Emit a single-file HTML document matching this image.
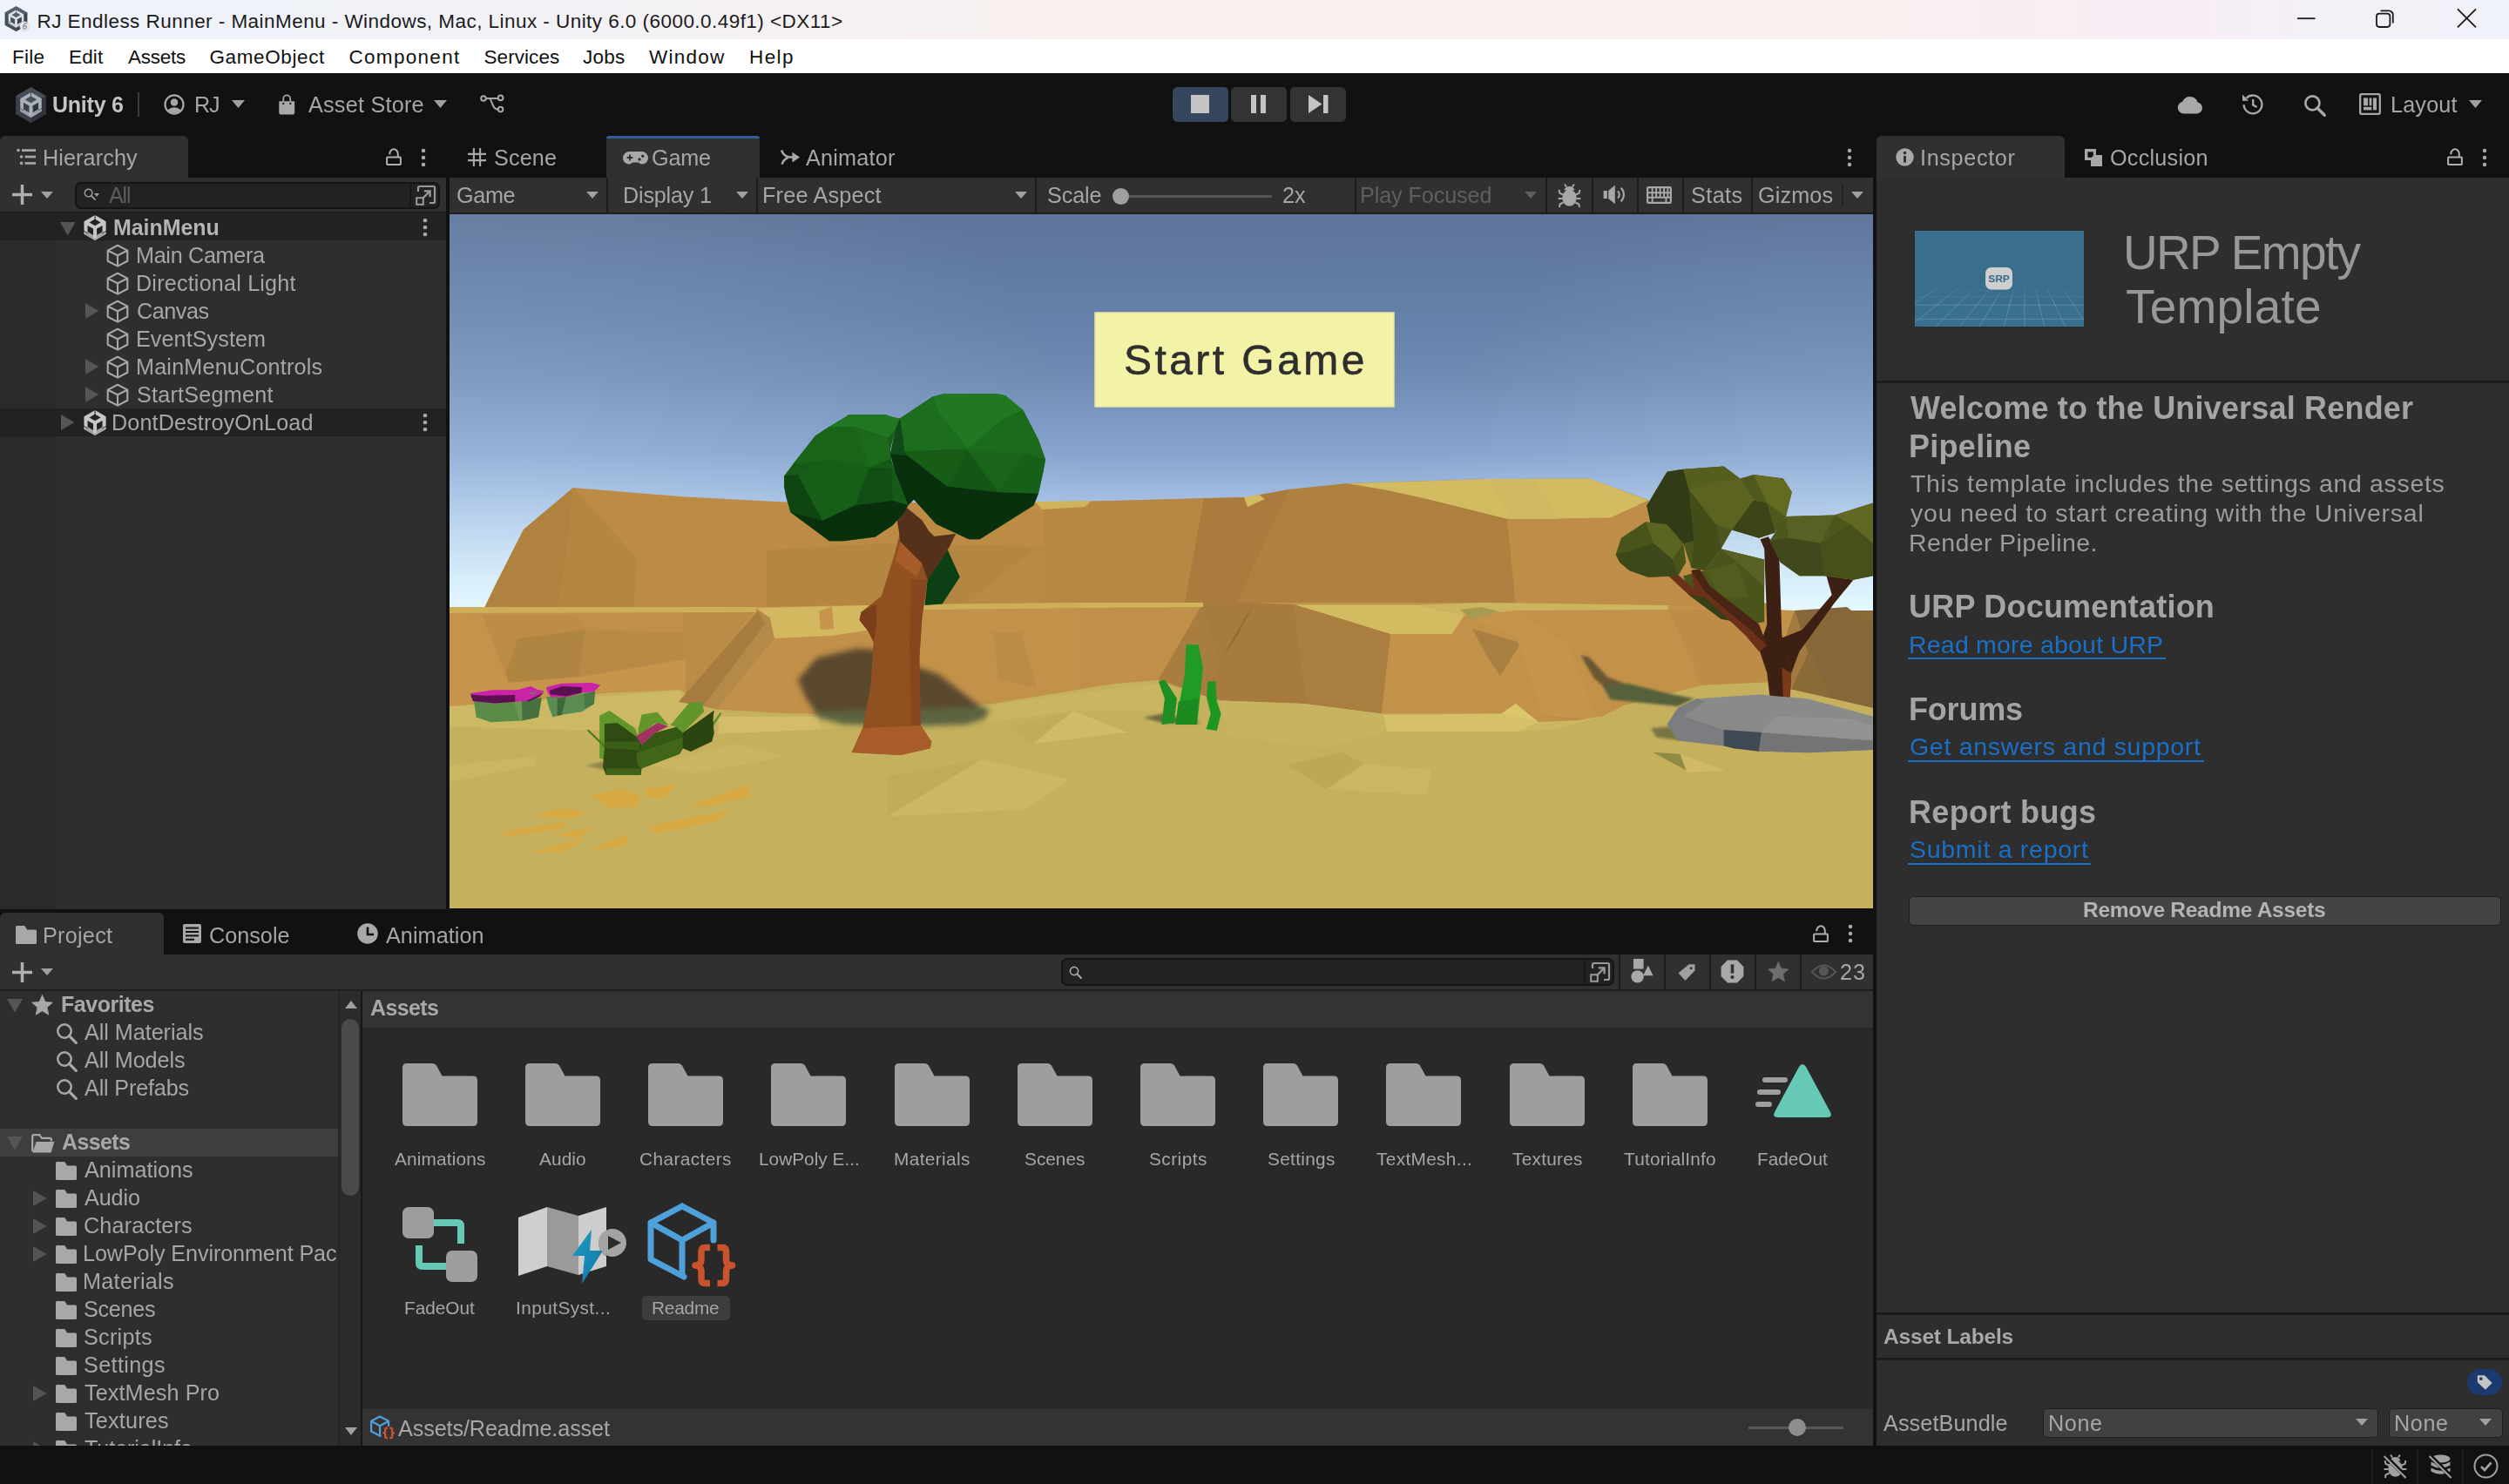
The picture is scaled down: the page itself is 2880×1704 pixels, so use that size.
<!DOCTYPE html>
<html><head><meta charset="utf-8"><title>Unity</title><style>
html,body{margin:0;padding:0;background:#111;}
body{width:2880px;height:1704px;position:relative;overflow:hidden;font-family:"Liberation Sans", sans-serif;}
#r{position:absolute;left:0;top:0;width:2880px;height:1704px;overflow:hidden;}
#r>div,#r>span,#r>svg{position:absolute;}
.t{white-space:nowrap;display:block;}
.g{will-change:transform;}
svg{overflow:visible;}
</style></head><body><div id="r">
<div style="left:0px;top:0px;width:2880px;height:1704px;background:#111111;"></div>
<div style="left:0px;top:0px;width:2880px;height:45px;background:linear-gradient(90deg,#eef2f9 0%,#f0f2f8 14%,#f5f1f3 30%,#f8f0ef 42%,#f8efef 75%,#f7edf6 87.5%,#f2f1f8 94%,#f0f2f9 100%);"></div>
<svg style="left:4px;top:6.5px" width="30.450000000000003" height="30.450000000000003" viewBox="0 0 105 105"><path d="M50 0L94 25V75L50 100L6 75V25Z" fill="#56606c"/><path d="M6 25L50 50V100L6 75Z" fill="#46505b"/><path d="M94 25L50 50V100L94 75Z" fill="#3a424c"/><g transform="translate(14 14) scale(0.72)"><path d="M50 8L86.4 29V71L50 92L13.6 71V29Z M13.6 29L50 50L86.4 29M50 50V92" fill="none" stroke="#dde2e8" stroke-width="12" stroke-linejoin="miter"/><path d="M13.6 71L50 92L86.4 71" fill="none" stroke="#c4cad2" stroke-width="12" stroke-linejoin="miter"/><path d="M50 57V92" stroke="#dde2e8" stroke-width="12"/><path d="M50 -2V22" stroke="#56606c" stroke-width="3.5"/><path d="M4 62L21 72M96 62L79 72" stroke="#56606c" stroke-width="3"/></g><circle cx="84" cy="80" r="19" fill="#f2f3f5"/><circle cx="84" cy="80" r="19" fill="none" stroke="#b9bdc4" stroke-width="2"/><text x="84" y="93" text-anchor="middle" font-family="Liberation Sans" font-weight="700" font-style="italic" font-size="36" fill="#8e949d">6</text></svg>
<span class="t" style="left:42.5px;top:14px;font-size:22.5px;line-height:22.5px;color:#1b1b1b;letter-spacing:0.453px;">RJ Endless Runner - MainMenu - Windows, Mac, Linux - Unity 6.0 (6000.0.49f1) &lt;DX11&gt;</span>
<svg style="left:2636px;top:8px" width="210" height="26" viewBox="0 0 210 26"><path d="M1 13.2H21.5" stroke="#1a1a1a" stroke-width="1.8" fill="none"/><rect x="92" y="7.6" width="15.4" height="15.4" rx="3.2" fill="none" stroke="#1a1a1a" stroke-width="1.8"/><path d="M96.6 4.4H106.2A4.6 4.6 0 0 1 110.8 9V18.6" fill="none" stroke="#1a1a1a" stroke-width="1.8"/><path d="M185 2.4L206 23.4M206 2.4L185 23.4" stroke="#1a1a1a" stroke-width="1.8" fill="none"/></svg>
<div style="left:0px;top:45px;width:2880px;height:39px;background:#ffffff;"></div>
<span class="t" style="left:14.0px;top:55px;font-size:22.5px;line-height:22.5px;color:#111;letter-spacing:0.253px;">File</span>
<span class="t" style="left:79.0px;top:55px;font-size:22.5px;line-height:22.5px;color:#111;letter-spacing:0.160px;">Edit</span>
<span class="t" style="left:147.0px;top:55px;font-size:22.5px;line-height:22.5px;color:#111;letter-spacing:-0.254px;">Assets</span>
<span class="t" style="left:240.5px;top:55px;font-size:22.5px;line-height:22.5px;color:#111;letter-spacing:0.606px;">GameObject</span>
<span class="t" style="left:400.5px;top:55px;font-size:22.5px;line-height:22.5px;color:#111;letter-spacing:1.303px;">Component</span>
<span class="t" style="left:555.5px;top:55px;font-size:22.5px;line-height:22.5px;color:#111;letter-spacing:0.068px;">Services</span>
<span class="t" style="left:669.0px;top:55px;font-size:22.5px;line-height:22.5px;color:#111;letter-spacing:0.241px;">Jobs</span>
<span class="t" style="left:745.0px;top:55px;font-size:22.5px;line-height:22.5px;color:#111;letter-spacing:1.245px;">Window</span>
<span class="t" style="left:860.0px;top:55px;font-size:22.5px;line-height:22.5px;color:#111;letter-spacing:1.413px;">Help</span>
<div style="left:0px;top:84px;width:2880px;height:72px;background:#111111;"></div>
<svg style="left:17.5px;top:100px" width="35" height="41" viewBox="6 0 88 100" preserveAspectRatio="none"><path d="M50 0L94 25V75L50 100L6 75V25Z" fill="#464d57"/><path d="M6 25L50 50V100L6 75Z" fill="#3a4049"/><path d="M94 25L50 50V100L94 75Z" fill="#30353d"/><g transform="translate(14 14) scale(0.72)"><path d="M50 8L86.4 29V71L50 92L13.6 71V29Z M13.6 29L50 50L86.4 29M50 50V92" fill="none" stroke="#aab0b9" stroke-width="13" stroke-linejoin="miter"/><path d="M13.6 71L50 92L86.4 71" fill="none" stroke="#9aa0a9" stroke-width="13" stroke-linejoin="miter"/><path d="M50 57V92" stroke="#aab0b9" stroke-width="13"/><path d="M50 -2V22" stroke="#464d57" stroke-width="3.5"/><path d="M4 62L21 72M96 62L79 72" stroke="#464d57" stroke-width="3"/></g></svg>
<span class="t g" style="left:60.0px;top:108px;font-size:25px;line-height:25px;color:#c4c4c4;font-weight:700;letter-spacing:-0.241px;">Unity 6</span>
<div style="left:158px;top:106px;width:2px;height:28px;background:#3a3a3a;"></div>
<svg style="left:188px;top:108px" width="24" height="24" viewBox="0 0 26 26"><defs><clipPath id="acc"><circle cx="13" cy="13" r="10.6"/></clipPath></defs><circle cx="13" cy="13" r="11.4" fill="none" stroke="#a8a8a8" stroke-width="2.4"/><circle cx="13" cy="10.4" r="4.6" fill="#a8a8a8"/><ellipse cx="13" cy="23.5" rx="9" ry="7" fill="#a8a8a8" clip-path="url(#acc)"/></svg>
<span class="t g" style="left:223.0px;top:108px;font-size:25.2px;line-height:25.2px;color:#a6a6a6;letter-spacing:-1.190px;">RJ</span>
<svg style="left:266px;top:115px" width="15" height="9" viewBox="0 0 15 9"><path d="M0 0H15L7.5 9Z" fill="#a0a0a0"/></svg>
<svg style="left:319px;top:108.5px" width="20.5" height="23" viewBox="0 0 23 27"><path d="M1 8.5H22V23.5A3 3 0 0 1 19 26.5H4A3 3 0 0 1 1 23.5Z" fill="#a8a8a8"/><path d="M6.8 11V5.2A4.7 4.7 0 0 1 16.2 5.2V11" fill="none" stroke="#a8a8a8" stroke-width="2"/><circle cx="6.8" cy="11.6" r="1.3" fill="#111"/><circle cx="16.2" cy="11.6" r="1.3" fill="#111"/></svg>
<span class="t g" style="left:353.5px;top:108px;font-size:25.2px;line-height:25.2px;color:#a6a6a6;letter-spacing:0.232px;">Asset Store</span>
<svg style="left:498px;top:115px" width="15" height="9" viewBox="0 0 15 9"><path d="M0 0H15L7.5 9Z" fill="#a0a0a0"/></svg>
<svg style="left:551px;top:108px" width="28" height="22" viewBox="0 0 28 22"><g fill="none" stroke="#a8a8a8" stroke-width="2"><circle cx="4" cy="5" r="2.8"/><circle cx="23.6" cy="4.4" r="2.8"/><circle cx="23.6" cy="17.6" r="2.8"/><path d="M6.8 5H20.8M10.5 5C14 5 13 17.6 20.8 17.6"/></g></svg>
<div style="left:1345.5px;top:100px;width:64px;height:40px;background:#35465d;border-radius:6px 5px 5px 6px;"></div>
<div style="left:1367px;top:109px;width:21px;height:21px;background:#c4c4c4;"></div>
<div style="left:1413px;top:100px;width:64px;height:40px;background:#333333;border-radius:5px;"></div>
<div style="left:1436px;top:109px;width:6px;height:21px;background:#c4c4c4;"></div>
<div style="left:1447px;top:109px;width:6px;height:21px;background:#c4c4c4;"></div>
<div style="left:1481px;top:100px;width:64px;height:40px;background:#333333;border-radius:5px 6px 6px 5px;"></div>
<svg style="left:1502px;top:109px" width="23" height="21" viewBox="0 0 23 21"><path d="M0 0L15.5 10.5L0 21Z" fill="#c4c4c4"/><rect x="17" y="0" width="5.5" height="21" fill="#c4c4c4"/></svg>
<svg style="left:2499px;top:109px" width="29" height="22" viewBox="0 0 29 22"><path d="M7.5 21.5A7 7 0 0 1 6.2 7.7A9.3 9.3 0 0 1 23.6 8.6A6.5 6.5 0 0 1 22.5 21.5Z" fill="#a8a8a8"/></svg>
<svg style="left:2571px;top:106px" width="28" height="27" viewBox="0 0 28 27"><path d="M4.6 14.2A10.4 10.4 0 1 0 7.6 6.6" fill="none" stroke="#a8a8a8" stroke-width="2.3"/><path d="M3 2.6V9.8H10.2Z" fill="#a8a8a8"/><path d="M15.2 8V14.6L19.6 17" fill="none" stroke="#a8a8a8" stroke-width="2.4"/></svg>
<svg style="left:2643.5px;top:107.5px" width="26" height="26" viewBox="0 0 24 24"><circle cx="9.6" cy="9.6" r="7.4" fill="none" stroke="#a8a8a8" stroke-width="2.5"/><path d="M14.8 14.8L22.4 22.4" stroke="#a8a8a8" stroke-width="3.125" stroke-linecap="round"/></svg>
<svg style="left:2708px;top:107px" width="25" height="25" viewBox="0 0 25 25"><rect x="1.2" y="1.2" width="22.6" height="22.6" rx="1.6" fill="none" stroke="#a8a8a8" stroke-width="2.3"/><rect x="5" y="5.4" width="5" height="8.9" fill="#a8a8a8"/><rect x="11.6" y="5.4" width="2.8" height="8.9" fill="#a8a8a8"/><rect x="16" y="5.4" width="4" height="14" fill="#a8a8a8"/><rect x="5" y="15.8" width="9.4" height="3.6" fill="#a8a8a8"/></svg>
<span class="t g" style="left:2744.0px;top:108px;font-size:25.2px;line-height:25.2px;color:#a6a6a6;letter-spacing:0.175px;">Layout</span>
<svg style="left:2834px;top:115px" width="15" height="9" viewBox="0 0 15 9"><path d="M0 0H15L7.5 9Z" fill="#a0a0a0"/></svg>
<div style="left:0px;top:156px;width:2880px;height:48px;background:#111111;"></div>
<div style="left:0px;top:156px;width:216px;height:48px;background:#303030;border-radius:6px 6px 0 0;"></div>
<svg style="left:19px;top:170px" width="22" height="20" viewBox="0 0 22 20"><g fill="#a8a8a8"><circle cx="2" cy="2.6" r="1.8"/><rect x="6" y="1.3" width="16" height="2.7"/><circle cx="5.6" cy="10" r="1.8"/><rect x="9.6" y="8.7" width="12.4" height="2.7"/><circle cx="5.6" cy="17.4" r="1.8"/><rect x="9.6" y="16.1" width="12.4" height="2.7"/></g></svg>
<span class="t g" style="left:49.0px;top:169px;font-size:25.2px;line-height:25.2px;color:#a6a6a6;letter-spacing:0.103px;">Hierarchy</span>
<svg style="left:443px;top:170px" width="18" height="20" viewBox="0 0 18 20"><rect x="1.1" y="10.4" width="15.8" height="8.6" rx="0.8" fill="none" stroke="#b0b0b0" stroke-width="2"/><path d="M4.3 7.2A4.75 5.6 0 0 1 13.8 6.6V10.4" fill="none" stroke="#b0b0b0" stroke-width="2"/></svg>
<svg style="left:483px;top:170px" width="6" height="22" viewBox="0 0 6 22"><circle cx="3" cy="3" r="2.3" fill="#a8a8a8"/><circle cx="3" cy="11" r="2.3" fill="#a8a8a8"/><circle cx="3" cy="19" r="2.3" fill="#a8a8a8"/></svg>
<svg style="left:537px;top:170px" width="21" height="21" viewBox="0 0 21 21"><path d="M6.9 0V21M14.1 0V21M0 6.9H21M0 14.1H21" stroke="#a8a8a8" stroke-width="2.1" fill="none"/></svg>
<span class="t g" style="left:567.0px;top:169px;font-size:25.2px;line-height:25.2px;color:#a6a6a6;letter-spacing:0.148px;">Scene</span>
<div style="left:696px;top:156px;width:176px;height:48px;background:#303030;border-radius:6px 6px 0 0;"></div>
<div style="left:696px;top:156px;width:176px;height:3px;background:#2f5f94;border-radius:6px 6px 0 0;"></div>
<svg style="left:715px;top:173px" width="29" height="17" viewBox="0 0 29 17"><path d="M7.5 1H21.5A7.5 7.5 0 0 1 29 8.5A7 7 0 0 1 22 15.5Q19.5 15.5 18 13.6H11Q9.5 15.5 7 15.5A7 7 0 0 1 0 8.5A7.5 7.5 0 0 1 7.5 1Z" fill="#a8a8a8"/><path d="M4.6 8H11.4M8 4.6V11.4" stroke="#303030" stroke-width="2"/><circle cx="19" cy="10" r="1.7" fill="#303030"/><circle cx="22.8" cy="6.2" r="1.7" fill="#303030"/></svg>
<span class="t g" style="left:748.0px;top:169px;font-size:25.2px;line-height:25.2px;color:#a6a6a6;letter-spacing:-0.194px;">Game</span>
<svg style="left:895px;top:171px" width="23" height="19" viewBox="0 0 23 19"><path d="M2 1.6C5 8.6 8 9.6 16 9.6M2.6 17.6C3.6 13.6 6 11.4 9.4 10.2" fill="none" stroke="#a8a8a8" stroke-width="2.5"/><path d="M14.4 3.8L23 9.6L14.4 15.4Z" fill="#a8a8a8"/></svg>
<span class="t g" style="left:925.0px;top:169px;font-size:25.2px;line-height:25.2px;color:#a6a6a6;letter-spacing:0.229px;">Animator</span>
<svg style="left:2120px;top:170px" width="6" height="22" viewBox="0 0 6 22"><circle cx="3" cy="3" r="2.3" fill="#a8a8a8"/><circle cx="3" cy="11" r="2.3" fill="#a8a8a8"/><circle cx="3" cy="19" r="2.3" fill="#a8a8a8"/></svg>
<div style="left:2154px;top:156px;width:216px;height:48px;background:#303030;border-radius:6px 6px 0 0;"></div>
<svg style="left:2176px;top:170px" width="21" height="21" viewBox="0 0 21 21"><circle cx="10.5" cy="10.5" r="10.2" fill="#a8a8a8"/><rect x="9" y="9" width="3" height="7.6" fill="#303030"/><circle cx="10.5" cy="5.6" r="1.8" fill="#303030"/></svg>
<span class="t g" style="left:2204.0px;top:169px;font-size:25.2px;line-height:25.2px;color:#a6a6a6;letter-spacing:0.661px;">Inspector</span>
<svg style="left:2393px;top:171px" width="20" height="20" viewBox="0 0 20 20"><rect x="0" y="0" width="13" height="13" fill="#a8a8a8"/><rect x="7" y="7" width="13" height="13" fill="#a8a8a8"/><rect x="3.4" y="3.4" width="6.4" height="6.4" fill="#111"/><rect x="8.4" y="8.4" width="3.2" height="3.2" fill="#a8a8a8"/></svg>
<span class="t g" style="left:2422.0px;top:169px;font-size:25.2px;line-height:25.2px;color:#a6a6a6;letter-spacing:0.240px;">Occlusion</span>
<svg style="left:2809px;top:170px" width="18" height="20" viewBox="0 0 18 20"><rect x="1.1" y="10.4" width="15.8" height="8.6" rx="0.8" fill="none" stroke="#b0b0b0" stroke-width="2"/><path d="M4.3 7.2A4.75 5.6 0 0 1 13.8 6.6V10.4" fill="none" stroke="#b0b0b0" stroke-width="2"/></svg>
<svg style="left:2849px;top:170px" width="6" height="22" viewBox="0 0 6 22"><circle cx="3" cy="3" r="2.3" fill="#a8a8a8"/><circle cx="3" cy="11" r="2.3" fill="#a8a8a8"/><circle cx="3" cy="19" r="2.3" fill="#a8a8a8"/></svg>
<div style="left:0px;top:204px;width:512px;height:840px;background:#2e2e2e;"></div>
<div style="left:0px;top:204px;width:512px;height:40px;background:#303030;"></div>
<div style="left:0px;top:243px;width:512px;height:2px;background:#1e1e1e;"></div>
<svg style="left:14px;top:212px" width="23" height="23" viewBox="0 0 23 23"><rect x="0" y="9.75" width="23" height="3.5" fill="#b0b0b0"/><rect x="9.75" y="0" width="3.5" height="23" fill="#b0b0b0"/></svg>
<svg style="left:47px;top:220px" width="14" height="8" viewBox="0 0 14 8"><path d="M0 0H14L7.0 8Z" fill="#a0a0a0"/></svg>
<div style="left:86px;top:209px;width:419px;height:31px;background:#222222;border-radius:7px;border:2px solid #141414;box-sizing:border-box;"></div>
<svg style="left:96px;top:216px" width="14" height="14" viewBox="0 0 24 24"><circle cx="9.6" cy="9.6" r="7.4" fill="none" stroke="#a0a0a0" stroke-width="2.4"/><path d="M14.8 14.8L22.4 22.4" stroke="#a0a0a0" stroke-width="3.0" stroke-linecap="round"/></svg>
<svg style="left:108px;top:222px" width="6" height="4" viewBox="0 0 6 4"><path d="M0 0H6L3.0 4Z" fill="#a0a0a0"/></svg>
<span class="t g" style="left:125.0px;top:212px;font-size:25.2px;line-height:25.2px;color:#5c5c5c;letter-spacing:-1.198px;">All</span>
<div style="left:470px;top:211px;width:2px;height:27px;background:#181818;"></div>
<svg style="left:476px;top:212px" width="25" height="25" viewBox="0 0 25 25"><path d="M4 8V3.6A1.6 1.6 0 0 1 5.6 2H21.4A1.6 1.6 0 0 1 23 3.6V19.4A1.6 1.6 0 0 1 21.4 21H17" fill="none" stroke="#9a9a9a" stroke-width="2.2"/><rect x="2.2" y="15.2" width="7.6" height="7.6" fill="none" stroke="#9a9a9a" stroke-width="2"/><path d="M8.6 16.4L17 8M10.8 7.4H17.6V14.2" fill="none" stroke="#9a9a9a" stroke-width="2.3"/></svg>
<div style="left:0px;top:245px;width:64px;height:799px;background:#2a2a2a;"></div>
<div style="left:0px;top:245px;width:512px;height:31px;background:#222222;"></div>
<div style="left:0px;top:469px;width:512px;height:32px;background:#222222;"></div>
<div style="left:0px;top:276px;width:512px;height:1px;background:#2a2a2a;"></div>
<svg style="left:68.5px;top:255px" width="17.5" height="15.5" viewBox="0 0 17.5 15.5"><path d="M0 0H17.5L8.75 15.5Z" fill="#555555"/></svg>
<svg style="left:96px;top:246.5px" width="26.1" height="29" viewBox="5 0 90 100"><g transform="translate(0 0) scale(1.0)"><path d="M50 8L86.4 29V71L50 92L13.6 71V29Z M13.6 29L50 50L86.4 29M50 50V92" fill="none" stroke="#c6c6c6" stroke-width="14" stroke-linejoin="miter"/><path d="M13.6 71L50 92L86.4 71" fill="none" stroke="#a2a2a2" stroke-width="14" stroke-linejoin="miter"/><path d="M50 57V92" stroke="#c6c6c6" stroke-width="14"/><path d="M50 -2V22" stroke="#222222" stroke-width="3.5"/><path d="M4 62L21 72M96 62L79 72" stroke="#222222" stroke-width="3"/></g></svg>
<span class="t g" style="left:130.0px;top:249px;font-size:25px;line-height:25px;color:#b4b4b4;font-weight:700;letter-spacing:-0.064px;">MainMenu</span>
<svg style="left:485px;top:250px" width="6" height="22" viewBox="0 0 6 22"><circle cx="3" cy="3" r="2.3" fill="#a8a8a8"/><circle cx="3" cy="11" r="2.3" fill="#a8a8a8"/><circle cx="3" cy="19" r="2.3" fill="#a8a8a8"/></svg>
<svg style="left:122px;top:280px" width="26" height="27" viewBox="0 0 26 27"><path d="M13 1.8L24.3 7.6V19.8L13 25.6L1.7 19.8V7.6Z M1.9 7.7L13 13.3L24.1 7.7 M13 13.3V25.4" fill="none" stroke="#a8a8a8" stroke-width="2.1" stroke-linejoin="round"/></svg>
<span class="t g" style="left:155.5px;top:281px;font-size:25.2px;line-height:25.2px;color:#a6a6a6;letter-spacing:-0.317px;">Main Camera</span>
<svg style="left:122px;top:312px" width="26" height="27" viewBox="0 0 26 27"><path d="M13 1.8L24.3 7.6V19.8L13 25.6L1.7 19.8V7.6Z M1.9 7.7L13 13.3L24.1 7.7 M13 13.3V25.4" fill="none" stroke="#a8a8a8" stroke-width="2.1" stroke-linejoin="round"/></svg>
<span class="t g" style="left:155.5px;top:313px;font-size:25.2px;line-height:25.2px;color:#a6a6a6;letter-spacing:0.181px;">Directional Light</span>
<svg style="left:97.5px;top:348px" width="15.5" height="18" viewBox="0 0 15.5 18"><path d="M0 0V18L15.5 9.0Z" fill="#555555"/></svg>
<svg style="left:122px;top:344px" width="26" height="27" viewBox="0 0 26 27"><path d="M13 1.8L24.3 7.6V19.8L13 25.6L1.7 19.8V7.6Z M1.9 7.7L13 13.3L24.1 7.7 M13 13.3V25.4" fill="none" stroke="#a8a8a8" stroke-width="2.1" stroke-linejoin="round"/></svg>
<span class="t g" style="left:156.5px;top:345px;font-size:25.2px;line-height:25.2px;color:#a6a6a6;letter-spacing:-0.462px;">Canvas</span>
<svg style="left:122px;top:376px" width="26" height="27" viewBox="0 0 26 27"><path d="M13 1.8L24.3 7.6V19.8L13 25.6L1.7 19.8V7.6Z M1.9 7.7L13 13.3L24.1 7.7 M13 13.3V25.4" fill="none" stroke="#a8a8a8" stroke-width="2.1" stroke-linejoin="round"/></svg>
<span class="t g" style="left:155.5px;top:377px;font-size:25.2px;line-height:25.2px;color:#a6a6a6;letter-spacing:0.060px;">EventSystem</span>
<svg style="left:97.5px;top:412px" width="15.5" height="18" viewBox="0 0 15.5 18"><path d="M0 0V18L15.5 9.0Z" fill="#555555"/></svg>
<svg style="left:122px;top:408px" width="26" height="27" viewBox="0 0 26 27"><path d="M13 1.8L24.3 7.6V19.8L13 25.6L1.7 19.8V7.6Z M1.9 7.7L13 13.3L24.1 7.7 M13 13.3V25.4" fill="none" stroke="#a8a8a8" stroke-width="2.1" stroke-linejoin="round"/></svg>
<span class="t g" style="left:155.5px;top:409px;font-size:25.2px;line-height:25.2px;color:#a6a6a6;letter-spacing:0.180px;">MainMenuControls</span>
<svg style="left:97.5px;top:444px" width="15.5" height="18" viewBox="0 0 15.5 18"><path d="M0 0V18L15.5 9.0Z" fill="#555555"/></svg>
<svg style="left:122px;top:440px" width="26" height="27" viewBox="0 0 26 27"><path d="M13 1.8L24.3 7.6V19.8L13 25.6L1.7 19.8V7.6Z M1.9 7.7L13 13.3L24.1 7.7 M13 13.3V25.4" fill="none" stroke="#a8a8a8" stroke-width="2.1" stroke-linejoin="round"/></svg>
<span class="t g" style="left:156.5px;top:441px;font-size:25.2px;line-height:25.2px;color:#a6a6a6;letter-spacing:0.227px;">StartSegment</span>
<svg style="left:70px;top:476px" width="15.5" height="18" viewBox="0 0 15.5 18"><path d="M0 0V18L15.5 9.0Z" fill="#555555"/></svg>
<svg style="left:96px;top:470.5px" width="26.1" height="29" viewBox="5 0 90 100"><g transform="translate(0 0) scale(1.0)"><path d="M50 8L86.4 29V71L50 92L13.6 71V29Z M13.6 29L50 50L86.4 29M50 50V92" fill="none" stroke="#c6c6c6" stroke-width="14" stroke-linejoin="miter"/><path d="M13.6 71L50 92L86.4 71" fill="none" stroke="#a2a2a2" stroke-width="14" stroke-linejoin="miter"/><path d="M50 57V92" stroke="#c6c6c6" stroke-width="14"/><path d="M50 -2V22" stroke="#222222" stroke-width="3.5"/><path d="M4 62L21 72M96 62L79 72" stroke="#222222" stroke-width="3"/></g></svg>
<span class="t g" style="left:127.5px;top:473px;font-size:25.2px;line-height:25.2px;color:#a6a6a6;letter-spacing:0.118px;">DontDestroyOnLoad</span>
<svg style="left:485px;top:474px" width="6" height="22" viewBox="0 0 6 22"><circle cx="3" cy="3" r="2.3" fill="#a8a8a8"/><circle cx="3" cy="11" r="2.3" fill="#a8a8a8"/><circle cx="3" cy="19" r="2.3" fill="#a8a8a8"/></svg>
<div style="left:516px;top:204px;width:1634px;height:42px;background:#303030;"></div>
<div style="left:516px;top:244px;width:1634px;height:2px;background:#1e1e1e;"></div>
<div style="left:696px;top:204px;width:2px;height:40px;background:#1c1c1c;"></div>
<div style="left:868px;top:204px;width:2px;height:40px;background:#1c1c1c;"></div>
<div style="left:1188px;top:204px;width:2px;height:40px;background:#1c1c1c;"></div>
<div style="left:1555px;top:204px;width:2px;height:40px;background:#1c1c1c;"></div>
<div style="left:1774px;top:204px;width:2px;height:40px;background:#1c1c1c;"></div>
<div style="left:1827px;top:204px;width:2px;height:40px;background:#1c1c1c;"></div>
<div style="left:1879px;top:204px;width:2px;height:40px;background:#1c1c1c;"></div>
<div style="left:1931px;top:204px;width:2px;height:40px;background:#1c1c1c;"></div>
<div style="left:2010px;top:204px;width:2px;height:40px;background:#1c1c1c;"></div>
<span class="t g" style="left:523.5px;top:212px;font-size:25.2px;line-height:25.2px;color:#a6a6a6;letter-spacing:-0.360px;">Game</span>
<svg style="left:673px;top:220px" width="14" height="8" viewBox="0 0 14 8"><path d="M0 0H14L7.0 8Z" fill="#a0a0a0"/></svg>
<span class="t g" style="left:715.0px;top:212px;font-size:25.2px;line-height:25.2px;color:#a6a6a6;letter-spacing:-0.198px;">Display 1</span>
<svg style="left:845px;top:220px" width="14" height="8" viewBox="0 0 14 8"><path d="M0 0H14L7.0 8Z" fill="#a0a0a0"/></svg>
<span class="t g" style="left:874.5px;top:212px;font-size:25.2px;line-height:25.2px;color:#a6a6a6;letter-spacing:0.221px;">Free Aspect</span>
<svg style="left:1165px;top:220px" width="14" height="8" viewBox="0 0 14 8"><path d="M0 0H14L7.0 8Z" fill="#a0a0a0"/></svg>
<span class="t g" style="left:1201.5px;top:212px;font-size:25.2px;line-height:25.2px;color:#a6a6a6;letter-spacing:-0.124px;">Scale</span>
<div style="left:1287px;top:224px;width:173px;height:3px;background:#555555;"></div>
<div style="left:1277px;top:216px;width:19px;height:19px;background:#a0a0a0;border-radius:50%;"></div>
<span class="t g" style="left:1471.5px;top:212px;font-size:25.2px;line-height:25.2px;color:#a6a6a6;letter-spacing:-0.008px;">2x</span>
<span class="t g" style="left:1561.0px;top:212px;font-size:25.2px;line-height:25.2px;color:#5f5f5f;letter-spacing:-0.099px;">Play Focused</span>
<svg style="left:1750px;top:220px" width="14" height="8" viewBox="0 0 14 8"><path d="M0 0H14L7.0 8Z" fill="#5f5f5f"/></svg>
<svg style="left:1787px;top:210px" width="29" height="29" viewBox="0 0 29 29"><g fill="#a8a8a8"><ellipse cx="14.5" cy="17.2" rx="8.2" ry="9.6"/><path d="M8.6 8.6A6 5.6 0 0 1 20.4 8.6Z"/></g><g stroke="#a8a8a8" stroke-width="2" fill="none" stroke-linejoin="round"><path d="M7.5 13.5L3.4 11.8L2.6 8M21.5 13.5L25.6 11.8L26.4 8M6.5 18H1.6M22.5 18H27.4M7.6 22.5L3.6 24.4L3 28M21.4 22.5L25.4 24.4L26 28M11 4.6L9.2 1.6M18 4.6L19.8 1.6"/></g></svg>
<svg style="left:1840px;top:212px" width="27" height="23" viewBox="0 0 27 23"><rect x="0.6" y="7" width="4.2" height="9" fill="#a8a8a8"/><path d="M6.2 7L13.8 0.8V22.2L6.2 16Z" fill="#a8a8a8"/><path d="M17 7.4A5.6 5.6 0 0 1 17 15.6M20.6 3.8A10.6 10.6 0 0 1 20.6 19.2" fill="none" stroke="#a8a8a8" stroke-width="2.1"/></svg>
<svg style="left:1890px;top:214px" width="29" height="20" viewBox="0 0 29 20"><rect x="1.1" y="1.1" width="26.8" height="17.8" rx="1.2" fill="none" stroke="#a8a8a8" stroke-width="2.2"/><g stroke="#a8a8a8" stroke-width="1.9" fill="none"><path d="M1 7.2H28M1 12.8H28"/><path d="M6.6 1V12.8"/><path d="M11.1 1V12.8"/><path d="M15.6 1V12.8"/><path d="M20.1 1V12.8"/><path d="M24.3 1V12.8"/><path d="M6.6 12.8V19M22.4 12.8V19"/></g></svg>
<span class="t g" style="left:1941.0px;top:212px;font-size:25.2px;line-height:25.2px;color:#a6a6a6;letter-spacing:0.424px;">Stats</span>
<span class="t g" style="left:2017.5px;top:212px;font-size:25.2px;line-height:25.2px;color:#a6a6a6;letter-spacing:0.146px;">Gizmos</span>
<div style="left:2114px;top:211px;width:2px;height:26px;background:#222;"></div>
<svg style="left:2125px;top:220px" width="14" height="8" viewBox="0 0 14 8"><path d="M0 0H14L7.0 8Z" fill="#a0a0a0"/></svg>
<svg style="left:516px;top:246px" width="1634" height="797" viewBox="516 246 1634 797" shape-rendering="geometricPrecision">
<defs><linearGradient id="sky" gradientUnits="userSpaceOnUse" x1="0" y1="246" x2="0" y2="700"><stop offset="0" stop-color="#5d7399"/><stop offset=".25" stop-color="#6580a8"/><stop offset=".42" stop-color="#718cb4"/><stop offset=".6" stop-color="#87a3cd"/><stop offset=".7" stop-color="#9eb9de"/><stop offset=".8" stop-color="#b9d1eb"/><stop offset=".9" stop-color="#d3e8f6"/><stop offset="1" stop-color="#e9fbff"/></linearGradient><radialGradient id="skl" gradientUnits="userSpaceOnUse" cx="516" cy="720" r="760"><stop offset="0" stop-color="#d6f0ff" stop-opacity=".3"/><stop offset=".5" stop-color="#d0e8ff" stop-opacity=".12"/><stop offset="1" stop-color="#cfe6ff" stop-opacity="0"/></radialGradient><radialGradient id="skr" gradientUnits="userSpaceOnUse" cx="2150" cy="720" r="560"><stop offset="0" stop-color="#d6f0ff" stop-opacity=".22"/><stop offset="1" stop-color="#cfe6ff" stop-opacity="0"/></radialGradient><filter id="b3" x="-20%" y="-20%" width="140%" height="140%"><feGaussianBlur stdDeviation="3"/></filter><filter id="b2" x="-20%" y="-20%" width="140%" height="140%"><feGaussianBlur stdDeviation="1.6"/></filter><clipPath id="gv"><rect x="516" y="246" width="1634" height="797"/></clipPath></defs>
<g clip-path="url(#gv)">
<rect x="516" y="246" width="1634" height="797" fill="url(#sky)"/>
<rect x="516" y="246" width="1634" height="460" fill="url(#skl)"/>
<rect x="516" y="246" width="1634" height="460" fill="url(#skr)"/>
<polygon points="555,700 570,669 601,608 658,560 787,570.5 902,576.6 1000,577 1198,577 1240,576 1430,571 1480,562 1547,555 1709,550 1824,549.6 1892,574 1915,690 1915,702" fill="#bc8b46" />
<polygon points="555,700 570,669 601,608 658,560 650,640 640,700" fill="#b08240" />
<polygon points="658,560 730,640 728,700 640,700 650,640" fill="#b58642" />
<polygon points="880,632 1010,624 1190,628 1384,630 1360,694 880,700" fill="#b38642" />
<polygon points="1190,628 1290,700 1100,700" fill="#b98a45" />
<polygon points="1198,577 1240,576 1382,572 1360,692 1200,692" fill="#b78744" />
<polygon points="1382,572 1430,571 1480,562 1420,692 1360,692" fill="#a97c3d" />
<polygon points="1480,562 1547,555 1603,560 1640,573 1730,596 1740,692 1420,692" fill="#ae8140" />
<polygon points="1730,596 1848,594.5 1892,574 1915,690 1915,702 1740,696" fill="#be8d47" />
<polygon points="1890,574 1925,600 1968,668 2030,694 2032,702 1912,702" fill="#be8d47" />
<polygon points="1546.7,555.3 1603,553.5 1709,550 1824,549.6 1892,574.4 1848.5,594.5 1740,596 1730,595.8 1638.4,572.9 1589,562.3" fill="#d3bb62" />
<polygon points="1709,550 1760,550 1790,596 1735,596" fill="#d0b860" />
<polygon points="1188,576 1252,575 1246,582 1196,585" fill="#d0b45c" />
<polygon points="1428,571 1445,568 1452,573 1432,582" fill="#d3bb62" />
<polygon points="516,697 868,697 1000,694.5 1240,692 1700,692 1915,695 2060,701 2150,701 2150,850 516,850" fill="#c2914a" />
<polygon points="516.0,702.7 553.3,706.1 580.4,773.9 516.0,794.2" fill="#c5934b" />
<polygon points="553.3,706.1 661.7,706.1 671.9,723.0 594.0,733.2 580.4,773.9" fill="#bd8d47" />
<polygon points="594.0,733.2 671.9,723.0 665.1,777.3 583.8,784.0 580.4,773.9" fill="#b08542" />
<polygon points="661.7,706.1 783.8,702.7 783.8,726.4 671.9,723.0" fill="#c0904a" />
<polygon points="671.9,723.0 783.8,726.4 787.1,756.9 665.1,777.3" fill="#b98a46" />
<polygon points="783.8,702.7 868.5,699.3 787.1,797.6 783.8,726.4" fill="#bb8c47" />
<polygon points="516.0,794.2 580.4,773.9 583.8,784.0 665.1,777.3 787.1,756.9 787.1,797.6 692.2,801.0 516.0,814.5" fill="#c6944b" />
<polygon points="1000,700 1240,700 1240,790 1139,808 1070,814 1000,821" fill="#c3924a" />
<polygon points="1140,726 1172,726 1190,790 1146,780" fill="#bb8c47" />
<polygon points="1240,692 1381,692 1330,780 1240,792" fill="#c08f49" />
<polygon points="1381,692 1440,692 1400,760 1381,798.5 1330,780" fill="#a87d3e" />
<polygon points="1381,696.3 1440,692 1486,694.5 1539.6,710.4 1596,728 1585.5,819.7 1398.6,805.5 1381,798.5 1400,760" fill="#a67b3d" />
<polygon points="1440,692 1420,730 1400,760 1435,700" fill="#8e6a35" />
<polygon points="1486,694.5 1539.6,710.4 1500,808 1490,740" fill="#ab7f40" />
<polygon points="1539.6,710.4 1596,728 1585.5,819.7 1500,808" fill="#a97e3f" />
<polygon points="1596,728 1666.6,728 1700,780 1740,822 1592,819.7" fill="#c4934b" />
<polygon points="1690,722 1746,738 1722,776 1706,752" fill="#a98042" />
<polygon points="1746,738 1800,760 1865,810 1808,827 1770,822" fill="#b98b47" />
<polygon points="1680.7,706.8 1740,700 1800,740 1835,826 1770,822 1740,730" fill="#c6954c" />
<polygon points="1740,700 1915,700 1954,786.7 1864,810 1835,826 1800,740" fill="#c3924a" />
<polygon points="1915,700 2040,700 2030,783 1954,786.7" fill="#bd8d48" />
<polygon points="516,697 868,697 868,703 516,704" fill="#cfae5a" />
<polygon points="868,698 1000,695 1000,723 956.6,729.8 888.8,733 883.7,709.5" fill="#d3b860" />
<polygon points="940,702 955,696 957,722 942,723" fill="#c6964c" />
<polygon points="1000,694.5 1240,692 1240,698 1000,701" fill="#cfae5a" />
<polygon points="1240,692 1381,692 1381,697 1240,698" fill="#d0b45c" />
<polygon points="1486.8,694.5 1627.8,694.5 1680.7,706.8 1666.6,728 1596,728 1539.6,710.4" fill="#d3bb62" />
<polygon points="1627.8,694.5 1700,692 1915,695 1915,700 1740,701 1680.7,706.8" fill="#cdb45e" />
<polygon points="1676,700 1700,697 1720,702 1690,712" fill="#a89a50" />
<polygon points="2060,701 2150,701 2150,813 2056,791.4 2075,750" fill="#8a6a37" />
<polygon points="2060,701 2120,697 2150,720 2150,813 2100,800" fill="#86673a" />
<polygon points="2060,701 2075,750 2056,791.4 2040,760" fill="#a27a40" />
<polygon points="516,811 600,805 692,796 780,792 823,814.5 900,819 1000,821 1070,814 1139,808 1280,785 1328,781 1381,798.5 1401.5,804.6 1496.8,808 1585.4,819.4 1723.4,819.4 1739.8,808 1766,829 1808.8,827.6 1839,822.7 1864,810 1954,786.7 2028,783.6 2056,791.4 2150,813 2150,1043 516,1043" fill="#c5b05d" />
<polygon points="516.0,811.2 686.8,799.7 778.7,793.1 801.7,816.1 778.7,829.3 680.2,839.1 516.0,834.2" fill="#cdb863" />
<polygon points="824.7,822.7 939.6,822.7 942.9,837.5 824.7,842.4" fill="#d3bd68" />
<polygon points="939.6,822.7 1074.3,819.4 1205.7,799.7 1330.4,784.9 1340.0,786.6 1340.0,816.1 1238.5,816.1 1133.4,829.3 942.9,837.5" fill="#cab561" />
<polygon points="516.0,878.5 614.5,868.7 614.5,878.5 516.0,898.2" fill="#cbb661" />
<polygon points="745.9,878.5 844.4,853.9 903.5,868.7 795.1,888.4" fill="#cab560" />
<polygon points="1018.5,891.7 1126.8,872.0 1018.5,937.6" fill="#c0ab5a" />
<polygon points="1018.5,937.6 1126.8,872.0 1228.6,894.9 1176.1,929.4" fill="#ccb762" />
<polygon points="1156.4,835.8 1231.9,816.1 1186.0,853.9" fill="#c1ac5b" />
<polygon points="1186.0,853.9 1231.9,816.1 1294.3,840.8" fill="#d0bb67" />
<polygon points="1401.5,804.6 1496.8,807.9 1585.4,819.4 1592.0,839.8 1523.0,858.8 1408.1,845.7" fill="#c8b460" />
<polygon points="1587.1,821.1 1723.4,819.4 1766.1,829.3 1743.1,839.8 1592.0,839.8" fill="#d6c068" />
<polygon points="1723.4,819.4 1739.8,807.9 1766.1,829.3" fill="#dcc66a" />
<polygon points="1766.1,829.3 1808.8,827.6 1838.3,822.7 1785.8,837.5 1743.1,839.8" fill="#ccb762" />
<polygon points="1477.1,878.5 1539.5,863.7 1565.7,876.9 1523.0,906.4" fill="#bda858" />
<polygon points="1523.0,906.4 1565.7,876.9 1642.9,883.4 1638.0,913.0" fill="#cbb662" />
<polygon points="1897.4,863.7 1928.6,866.0 1935.2,884.4" fill="#8f8a44" />
<polygon points="1928.6,866.0 1981.2,885.1 1936.8,886.7" fill="#d0ba66" />
<polygon points="678.7,912.8 712.6,906.1 732.9,912.8 732.9,926.4 699.0,928.1" fill="#d7a942" />
<polygon points="739.7,906.1 777.0,900.0 763.4,916.2 743.1,916.2" fill="#d7a942" />
<polygon points="790.5,924.7 858.3,901.0 861.7,914.5 810.9,926.4" fill="#d7a942" />
<polygon points="614.3,936.6 641.4,928.1 678.7,933.2 651.6,939.9" fill="#d7a942" />
<polygon points="577.0,955.2 651.6,943.3 644.8,951.8 583.8,960.3" fill="#d7a942" />
<polygon points="634.6,958.6 682.1,950.1 665.1,962.0" fill="#d7a942" />
<polygon points="607.5,978.9 671.9,962.0 644.8,978.9" fill="#d7a942" />
<polygon points="675.3,977.2 721.1,956.9 719.4,970.5" fill="#d7a942" />
<polygon points="743.1,948.4 841.4,929.8 821.0,943.3 753.3,956.9" fill="#d7a942" />
<polygon points="778.7,806.1 870.2,701.0 878.7,716.2 807.5,811.1" fill="#a77d3f" />
<polygon points="807.5,811.1 878.7,716.2 870.2,701.0 883.7,709.5 888.8,733.2 822.7,814.5" fill="#b58947" />
<polygon points="822.7,814.5 888.8,733.2 1000.0,729.8 1000.0,821.3" fill="#c1904a" />
<g filter="url(#b3)">
<polygon points="915.8,780.3 937.5,755.5 984.0,744.6 1005.7,746.2 1058.4,767.9 1077.0,774.1 1117.3,805.1 1134.3,817.5 1129.7,825.2 1108.0,831.4 1058.4,833.0 968.5,831.4 940.6,823.7 925.1,802.0" fill="#5a4a2e" />
<polygon points="932.8,817.5 1132.8,811.9 1135.0,818.1 1129.7,825.8 1108.0,832.0 1058.4,833.6 968.5,832.0 940.0,824.3" fill="#5b6340" />
</g>
<g filter="url(#b2)">
<polygon points="1814.4,752.6 1823.7,754.2 1845.4,777.4 1870.2,786.7 1842.3,789.8 1829.9,779.0" fill="#6b5632" />
<polygon points="1839.2,786.7 1870.2,785.2 1913.6,796.0 1944.6,802.2 1926.0,810.9 1848.5,803.2" fill="#56603a" />
<polygon points="1895.0,836.3 1926.0,833.2 1929.1,850.3 1901.2,846.6" fill="#7a7440" />
<polygon points="671.9,878.9 695.6,873.9 695.6,884.0" fill="#8f8448" />
<polygon points="1312.3,823.9 1335.2,819.6 1381.0,830.2 1335.2,830.2" fill="#6f6a3a" />
</g>
<polygon points="544.0,804.4 591.2,804.4 601.4,803.4 621.8,801.2 618.0,823.6 598.9,827.4 563.2,829.3 546.6,823.6" fill="#5b8b49" />
<polygon points="598.9,803.8 621.8,801.2 618.0,823.6 598.9,827.4" fill="#47713f" />
<polygon points="589.9,805.7 598.9,803.8 599.5,827.4 596.3,826.1" fill="#6a9a52" />
<polygon points="626.9,800.0 649.9,800.0 683.1,793.6 681.8,808.3 667.8,817.2 643.5,821.0 634.6,823.6 630.8,814.6" fill="#5b8b51" />
<polygon points="639.7,801.9 649.9,800.0 644.8,821.0 639.7,821.7" fill="#3c6838" />
<polygon points="670.3,796.8 683.1,793.6 681.8,808.3 671.6,813.4" fill="#4a7843" />
<polygon points="540.2,796.1 565.7,792.3 593.8,792.3 609.1,787.9 616.7,791.7 624.4,793.6 619.3,799.3 604.0,805.1 591.2,805.7 568.3,807.6 542.8,805.1" fill="#cb23a8" />
<polygon points="540.2,797.4 555.5,798.7 591.2,798.1 591.2,805.7 568.3,807.6 542.8,805.1" fill="#5c0f50" />
<polygon points="605.3,804.4 624.4,794.9 619.3,800.0 606.5,805.7" fill="#5c0f50" />
<polygon points="606.5,796.1 616.7,794.2 611.6,797.4" fill="#5b8b49" />
<polygon points="626.9,789.1 644.8,784.7 679.2,784.0 689.4,786.6 681.8,794.2 667.8,795.5 649.9,800.6 632.0,800.6 628.2,794.2" fill="#cb23a8" />
<polygon points="630.8,793.0 644.8,787.9 667.8,789.1 667.8,795.5 649.9,799.3 632.0,797.4" fill="#5c0f50" />
<polygon points="688.2,821.7 699.6,815.9 729.0,836.3 732.8,846.5 694.5,831.2 693.9,872.0 688.2,870.8" fill="#62962a" />
<polygon points="732.8,836.3 736.6,820.4 754.5,817.8 767.2,832.5 751.9,830.6 732.8,845.3" fill="#62962a" />
<polygon points="769.8,832.5 791.5,806.4 806.1,806.4 808.1,817.2 783.8,841.4 776.2,835.1" fill="#62962a" />
<polygon points="673.5,838.6 675.4,837.6 696.5,857.4 694.5,859.3" fill="#4f7a22" />
<polygon points="808.7,843.3 826.6,818.2 828.5,819.1 811.2,845.3" fill="#5a8a26" />
<polygon points="693.9,831.2 708.6,829.9 731.5,846.5 736.6,855.5 751.9,841.4 776.2,835.1 783.8,841.4 819.5,815.9 818.3,826.1 819.5,842.1 817.0,851.6 783.8,859.3 780.0,865.7 736.6,882.2 735.4,889.9 695.8,889.9 692.0,881.0 693.9,859.3" fill="#2f4a12" />
<polygon points="693.9,851.6 734.1,851.6 734.1,861.8 711.1,859.9 693.9,859.3" fill="#3b5e16" />
<polygon points="730.3,864.4 783.8,846.5 783.8,859.3 780.0,865.7 736.6,882.2 731.5,878.4" fill="#416619" />
<polygon points="736.6,855.5 751.9,841.4 776.2,835.1 783.8,841.4 783.8,846.5 730.3,864.4 734.1,859.3" fill="#375814" />
<polygon points="730.3,845.3 754.5,829.9 767.2,833.8 751.9,841.4 736.6,855.5" fill="#a03360" />
<polygon points="783.8,841.4 819.5,815.9 818.3,826.1 819.5,842.1 817.0,851.6 792.8,863.1 783.8,859.3" fill="#2b4510" />
<polygon points="695.8,882.2 735.4,882.2 735.4,889.9 695.8,889.9" fill="#3f6217" />
<polygon points="1329.9,782.6 1336.9,780.2 1351.0,802.0 1347.5,830.2 1333.4,832.0 1336.9,802.0" fill="#1d8f22" />
<polygon points="1361.6,740.3 1375.7,740.3 1381.0,766.8 1374.0,832.0 1349.3,832.0 1359.9,773.8" fill="#209c24" />
<polygon points="1352.8,805.5 1375.7,802.0 1374.0,832.0 1349.3,832.0" fill="#1b8a20" />
<polygon points="1386.3,782.6 1395.1,782.6 1396.9,805.5 1401.5,819.6 1396.9,839.0 1384.5,837.3 1389.8,819.6 1385.2,802.0" fill="#1e9622" />
<polygon points="1087.8,631.5 1101.8,662.5 1081.6,693.5 1061.5,695.0 1064.6,665.6 1077.0,640.8" fill="#0c3f14" />
<polygon points="1028.9,591.2 1041.3,583.4 1058.4,597.4 1066.1,609.8 1072.3,616.0 1097.1,612.9 1089.4,628.4 1064.6,665.6 1058.4,709.0 1055.3,755.5 1056.8,833.0 1069.2,851.6 1067.7,859.3 1033.6,867.1 977.8,864.0 990.2,836.1 999.5,786.5 1002.6,736.9 996.4,724.5 986.5,712.1 988.6,702.8 1011.9,684.2 1027.4,634.6 1033.6,609.8" fill="#91501f" />
<polygon points="1028.9,591.2 1041.3,583.4 1058.4,597.4 1066.1,609.8 1072.3,616.0 1097.1,612.9 1089.4,628.4 1064.6,665.6 1058.4,647.0 1033.6,622.2" fill="#55301a" />
<polygon points="1033.6,622.2 1058.4,647.0 1052.2,662.5 1027.4,643.9" fill="#a65c28" />
<polygon points="1046.0,665.6 1064.6,665.6 1058.4,709.0 1055.3,755.5 1056.8,833.0 1046.0,836.1 1044.4,740.0" fill="#85471d" />
<polygon points="986.5,712.1 988.6,702.8 1005.7,693.5 1005.7,721.4 1002.6,736.9 996.4,724.5" fill="#7a3f1a" />
<polygon points="977.8,864.0 990.2,836.1 1056.8,833.0 1069.2,851.6 1067.7,859.3 1033.6,867.1" fill="#a85c2a" />
<polygon points="900.1,546.5 910.2,533.0 935.8,500.6 970.9,478.4 974.2,476.1 1016.0,476.1 1024.8,479.1 1032.9,480.4 1027.5,493.9 1022.1,515.5 1022.7,526.3 1027.5,542.4 1042.3,580.2 1038.2,588.2 1024.8,603.1 1004.6,616.5 968.2,621.3 952.0,621.3 907.5,588.2 902.1,569.4 900.1,558.6" fill="#165a17" />
<polygon points="970.9,478.4 974.2,476.1 1016.0,476.1 1024.8,479.1 1032.9,480.4 1027.5,493.9 1019.4,503.3 981.6,490.5 950.6,490.5" fill="#217621" />
<polygon points="910.2,533.0 935.8,500.6 950.6,490.5 981.6,490.5 1019.4,503.3 1023.4,526.3 997.8,537.0 952.0,528.3" fill="#196419" />
<polygon points="981.6,490.5 1019.4,503.3 1023.4,526.3 997.8,537.0" fill="#1b691b" />
<polygon points="952.0,528.3 997.8,537.0 981.6,580.2 943.9,597.7 915.6,545.1" fill="#175e18" />
<polygon points="997.8,537.0 1023.4,537.0 1024.8,574.8 981.6,580.2" fill="#124f15" />
<polygon points="900.1,546.5 915.6,545.1 943.9,597.7 907.5,588.2 902.1,569.4 900.1,558.6" fill="#0f4513" />
<polygon points="907.5,588.2 943.9,597.7 981.6,580.2 1024.8,574.8 1042.3,580.2 1038.2,588.2 1024.8,603.1 1004.6,616.5 968.2,621.3 952.0,621.3" fill="#08300d" />
<polygon points="1022.1,520.9 1027.5,493.9 1032.9,480.4 1070.6,455.5 1084.1,452.1 1143.4,452.1 1154.2,454.2 1174.4,471.0 1191.9,504.7 1200.0,527.6 1197.3,542.4 1191.9,566.7 1186.5,580.2 1124.5,619.2 1112.4,619.2 1074.6,601.7 1049.0,573.4 1042.3,580.2 1027.5,542.4" fill="#175d18" />
<polygon points="1070.6,455.5 1084.1,452.1 1143.4,452.1 1154.2,454.2 1174.4,471.0 1150.1,481.8 1111.0,515.5 1077.3,473.7" fill="#227822" />
<polygon points="1032.9,480.4 1070.6,455.5 1077.3,473.7 1111.0,515.5 1038.2,518.2 1035.6,496.6" fill="#1d6d1e" />
<polygon points="1111.0,515.5 1150.1,481.8 1174.4,471.0 1191.9,504.7 1200.0,527.6 1175.7,520.9 1111.0,518.2" fill="#1c6b1d" />
<polygon points="1038.2,518.2 1111.0,518.2 1086.8,558.6 1042.3,523.6" fill="#175d18" />
<polygon points="1111.0,518.2 1175.7,520.9 1146.1,565.3 1086.8,558.6" fill="#1a651b" />
<polygon points="1111.0,518.2 1086.8,558.6 1146.1,565.3" fill="#145616" />
<polygon points="1175.7,520.9 1200.0,527.6 1197.3,542.4 1191.9,566.7 1146.1,565.3" fill="#176019" />
<polygon points="1022.1,520.9 1027.5,493.9 1032.9,480.4 1035.6,496.6 1038.2,518.2 1042.3,523.6 1027.5,542.4" fill="#11491a" />
<polygon points="1022.1,520.9 1042.3,523.6 1086.8,558.6 1146.1,565.3 1191.9,566.7 1186.5,580.2 1124.5,619.2 1112.4,619.2 1074.6,601.7 1049.0,573.4 1042.3,580.2 1027.5,542.4" fill="#08300d" />
<polygon points="1957.0,655.0 1975.6,630.2 2025.2,642.6 2025.2,713.9 2009.7,717.0 1975.6,710.8 1938.4,682.9 1932.2,661.2" fill="#49551a" />
<polygon points="1975.6,630.2 2025.2,642.6 2025.2,673.6 1994.2,645.7" fill="#576224" />
<polygon points="1957.0,655.0 1994.2,645.7 2006.6,686.0 1975.6,686.0" fill="#515c1e" />
<polygon points="1938.4,682.9 1975.6,686.0 2009.7,717.0 1975.6,710.8" fill="#354015" />
<polygon points="2020.5,619.3 2029.8,616.2 2042.2,636.4 2045.3,729.4 2056.2,772.8 2054.6,802.2 2031.4,799.1 2028.3,772.8 2019.0,744.9 2028.3,717.0 2025.2,630.2" fill="#3d2014" />
<polygon points="1915.1,661.2 1926.0,659.6 1944.6,676.7 1941.5,655.0 1950.8,653.4 1963.2,673.6 2019.0,717.0 2028.3,741.8 2019.0,748.0 2003.5,729.4 1957.0,686.0 1938.4,682.9" fill="#6a3018" />
<polygon points="1941.5,655.0 1950.8,653.4 1963.2,673.6 2019.0,717.0 2028.3,741.8 2012.8,726.3 1957.0,679.8" fill="#4a2415" />
<polygon points="2096.5,661.2 2127.5,665.8 2105.8,692.2 2065.5,748.0 2056.2,772.8 2045.3,732.5 2068.6,723.2 2102.7,682.9" fill="#3d2014" />
<polygon points="2045.3,766.6 2056.2,772.8 2054.6,802.2 2046.9,801.3" fill="#7a3a1a" />
<polygon points="2039.1,608.5 2045.3,596.1 2050.0,599.2 2043.8,611.6" fill="#6a3018" />
<polygon points="1890.3,580.6 1913.6,541.8 1932.2,538.7 1978.7,535.6 1997.3,549.6 2012.8,574.4 1988.0,608.5 1975.6,630.2 1957.0,655.0 1941.5,651.9 1932.2,624.0 1895.0,602.3" fill="#4d561c" />
<polygon points="1890.3,580.6 1913.6,541.8 1932.2,538.7 1938.4,562.0 1944.6,620.9 1932.2,624.0 1895.0,602.3" fill="#313b15" />
<polygon points="1932.2,538.7 1978.7,535.6 1997.3,549.6 1969.4,552.7 1938.4,562.0" fill="#565e1e" />
<polygon points="1938.4,562.0 1969.4,552.7 1997.3,549.6 2012.8,574.4 1988.0,608.5 1969.4,602.3" fill="#5c6320" />
<polygon points="1938.4,562.0 1969.4,602.3 1975.6,630.2 1957.0,655.0 1941.5,651.9 1944.6,620.9" fill="#424d18" />
<polygon points="1854.7,636.4 1860.9,617.8 1888.8,599.2 1913.6,602.3 1932.2,624.0 1935.3,645.7 1926.0,661.2 1891.9,662.7 1870.2,655.0 1859.3,645.7" fill="#49541b" />
<polygon points="1888.8,599.2 1913.6,602.3 1932.2,624.0 1919.8,642.6 1898.1,624.0" fill="#5b6320" />
<polygon points="1854.7,636.4 1870.2,633.3 1898.1,624.0 1919.8,642.6 1926.0,661.2 1891.9,662.7 1870.2,655.0 1859.3,645.7" fill="#3d4818" />
<polygon points="1997.3,549.6 2012.8,544.9 2046.9,549.6 2056.8,565.1 2050.0,593.0 2037.6,611.6 2019.0,617.8 1988.0,608.5 2012.8,574.4" fill="#50591d" />
<polygon points="2012.8,544.9 2046.9,549.6 2056.8,565.1 2050.0,593.0 2028.3,577.5" fill="#636a22" />
<polygon points="1988.0,608.5 2012.8,574.4 2028.3,577.5 2037.6,611.6 2019.0,617.8" fill="#3c4415" />
<polygon points="2031.4,620.9 2050.0,593.0 2105.8,591.4 2149.8,577.5 2149.8,661.2 2127.5,665.8 2093.4,661.2 2065.5,661.2 2043.8,645.7" fill="#4d561c" />
<polygon points="2105.8,591.4 2149.8,577.5 2149.8,624.0 2124.4,602.3" fill="#626822" />
<polygon points="2050.0,593.0 2105.8,591.4 2090.3,624.0 2053.1,617.8" fill="#586024" />
<polygon points="2031.4,620.9 2053.1,617.8 2090.3,624.0 2093.4,661.2 2065.5,661.2 2043.8,645.7" fill="#3f491b" />
<polygon points="2090.3,624.0 2124.4,602.3 2149.8,624.0 2149.8,661.2 2127.5,665.8 2093.4,661.2" fill="#47501a" />
<polygon points="1913.6,831.7 1926.0,813.1 1947.7,802.2 2019.0,797.6 2074.8,802.2 2149.8,822.4 2149.8,861.1 2074.8,864.2 2019.0,862.7 1978.7,856.5 1926.0,850.3" fill="#8a8a88" />
<polygon points="1913.6,831.7 1926.0,813.1 1947.7,802.2 1957.0,805.3 1932.2,822.4 1978.7,837.9 1978.7,856.5 1926.0,850.3" fill="#7c7d80" />
<polygon points="1978.7,837.9 2022.1,841.0 2019.0,862.7 1991.1,859.6 1978.7,856.5" fill="#3f4954" />
<polygon points="2022.1,841.0 2149.8,850.3 2149.8,861.1 2074.8,864.2 2019.0,862.7" fill="#747474" />
<polygon points="2022.1,841.0 2037.6,822.4 2127.5,825.5 2149.8,833.2 2149.8,850.3" fill="#929290" />
<rect x="1257" y="359" width="343" height="108" fill="#f3f3a7"/>
<rect x="1257" y="359" width="343" height="108" fill="none" stroke="#e6e6a0" stroke-width="1.5"/>
</g></svg>
<span class="t g" style="left:1290.3px;top:390px;font-size:48px;line-height:48px;color:#2e2e2e;letter-spacing:3.442px;-webkit-text-stroke:0.6px #2e2e2e;">Start Game</span>
<div style="left:512px;top:204px;width:4px;height:840px;background:#111111;"></div>
<div style="left:2150px;top:204px;width:4px;height:1456px;background:#111111;"></div>
<div style="left:2154px;top:204px;width:726px;height:1456px;background:#2e2e2e;"></div>
<svg style="left:2198px;top:265px" width="194" height="110" viewBox="0 0 194 110"><defs><linearGradient id="uf" x1="0" y1="0" x2="0" y2="1"><stop offset="0" stop-color="#396f8d" stop-opacity="1"/><stop offset="1" stop-color="#396f8d" stop-opacity="0"/></linearGradient><clipPath id="uc"><rect x="0" y="0" width="194" height="110"/></clipPath></defs><rect x="0" y="0" width="194" height="110" fill="#396f8d"/><g clip-path="url(#uc)" stroke="#a9c8d8" stroke-width="0.9" opacity=".44" fill="none"><path d="M29.6 63L0 83"/><path d="M49 65.9L0 105.4"/><path d="M68.5 65.9L23.8 110"/><path d="M85.7 67L51.3 110"/><path d="M99.4 68.2L74.2 110"/><path d="M113.2 68.2L102.3 110"/><path d="M125.8 62.4L125.8 110"/><path d="M138.9 68.2L148.7 110"/><path d="M152.1 67L172.7 110"/><path d="M171.6 69.3L194 102.5"/><path d="M0 68.2H194" opacity="0.3"/><path d="M0 75.6H194" opacity="0.45"/><path d="M0 85.3H194" opacity="0.8"/><path d="M0 101.4H194" opacity="1"/></g><rect x="0" y="58" width="194" height="30" fill="url(#uf)"/><rect x="0" y="88" width="194" height="22" fill="#3c7494" opacity=".25"/><rect x="81" y="42" width="31" height="25.4" rx="6.5" fill="#cfcfcf"/><text x="96.5" y="58.9" text-anchor="middle" font-family="Liberation Sans" font-weight="700" font-size="11.8" fill="#35698a">SRP</text></svg>
<span class="t g" style="left:2437.0px;top:263px;font-size:55px;line-height:55px;color:#989898;letter-spacing:-1.659px;">URP Empty</span>
<span class="t g" style="left:2440.0px;top:325px;font-size:55px;line-height:55px;color:#989898;letter-spacing:0.203px;">Template</span>
<div style="left:2154px;top:437px;width:726px;height:3px;background:#1c1c1c;"></div>
<span class="t g" style="left:2192.5px;top:451px;font-size:36px;line-height:36px;color:#a4a4a4;font-weight:700;letter-spacing:0.184px;">Welcome to the Universal Render</span>
<span class="t g" style="left:2190.5px;top:495px;font-size:36px;line-height:36px;color:#a4a4a4;font-weight:700;letter-spacing:0.283px;">Pipeline</span>
<span class="t g" style="left:2192.5px;top:541px;font-size:28.5px;line-height:28.5px;color:#9c9c9c;letter-spacing:0.661px;">This template includes the settings and assets</span>
<span class="t g" style="left:2192.5px;top:575px;font-size:28.5px;line-height:28.5px;color:#9c9c9c;letter-spacing:0.781px;">you need to start creating with the Universal</span>
<span class="t g" style="left:2190.5px;top:609px;font-size:28.5px;line-height:28.5px;color:#9c9c9c;letter-spacing:0.380px;">Render Pipeline.</span>
<span class="t g" style="left:2190.5px;top:679px;font-size:36px;line-height:36px;color:#a4a4a4;font-weight:700;letter-spacing:0.217px;">URP Documentation</span>
<span class="t g" style="left:2190.5px;top:726px;font-size:28.5px;line-height:28.5px;color:#1a6fc6;letter-spacing:0.205px;">Read more about URP</span>
<div style="left:2190px;top:755px;width:296px;height:2px;background:#1a6fc6;"></div>
<span class="t g" style="left:2190.5px;top:797px;font-size:36px;line-height:36px;color:#a4a4a4;font-weight:700;letter-spacing:-0.198px;">Forums</span>
<span class="t g" style="left:2191.5px;top:843px;font-size:28.5px;line-height:28.5px;color:#1a6fc6;letter-spacing:0.704px;">Get answers and support</span>
<div style="left:2190px;top:873px;width:340px;height:2px;background:#1a6fc6;"></div>
<span class="t g" style="left:2190.5px;top:915px;font-size:36px;line-height:36px;color:#a4a4a4;font-weight:700;letter-spacing:0.303px;">Report bugs</span>
<span class="t g" style="left:2191.5px;top:961px;font-size:28.5px;line-height:28.5px;color:#1a6fc6;letter-spacing:0.720px;">Submit a report</span>
<div style="left:2190px;top:991px;width:210px;height:2px;background:#1a6fc6;"></div>
<div style="left:2191px;top:1028.5px;width:680px;height:34px;background:#444444;border-radius:5px;border:1px solid #1e1e1e;box-sizing:border-box;"></div>
<span class="t g" style="left:2391.0px;top:1033px;font-size:24.5px;line-height:24.5px;color:#b4b4b4;font-weight:700;letter-spacing:-0.262px;">Remove Readme Assets</span>
<div style="left:2154px;top:1507px;width:726px;height:3px;background:#1c1c1c;"></div>
<span class="t g" style="left:2162.0px;top:1523px;font-size:24.5px;line-height:24.5px;color:#a8a8a8;font-weight:700;letter-spacing:-0.184px;">Asset Labels</span>
<div style="left:2154px;top:1559px;width:726px;height:3px;background:#1c1c1c;"></div>
<div style="left:2832px;top:1572px;width:40px;height:30px;background:#1b3a70;border-radius:15px;"></div>
<svg style="left:2842px;top:1577px" width="20" height="20" viewBox="0 0 22 22"><path d="M2 2.5H11L20.5 12L12 20.5L2 11Z" fill="#c4c4c4"/><rect x="4.6" y="5" width="3.6" height="3.6" fill="#1b3a70"/></svg>
<span class="t g" style="left:2162.0px;top:1622px;font-size:25.2px;line-height:25.2px;color:#a6a6a6;letter-spacing:0.109px;">AssetBundle</span>
<div style="left:2345px;top:1617px;width:385px;height:34px;background:#414141;border-radius:5px;border:1px solid #1e1e1e;box-sizing:border-box;"></div>
<span class="t g" style="left:2351.0px;top:1622px;font-size:25.2px;line-height:25.2px;color:#a6a6a6;letter-spacing:0.598px;">None</span>
<svg style="left:2704px;top:1629px" width="14" height="8" viewBox="0 0 14 8"><path d="M0 0H14L7.0 8Z" fill="#a0a0a0"/></svg>
<div style="left:2742px;top:1617px;width:131px;height:34px;background:#414141;border-radius:5px;border:1px solid #1e1e1e;box-sizing:border-box;"></div>
<span class="t g" style="left:2748.0px;top:1622px;font-size:25.2px;line-height:25.2px;color:#a6a6a6;letter-spacing:0.598px;">None</span>
<svg style="left:2846px;top:1629px" width="14" height="8" viewBox="0 0 14 8"><path d="M0 0H14L7.0 8Z" fill="#a0a0a0"/></svg>
<div style="left:0px;top:1044px;width:2150px;height:52px;background:#111111;"></div>
<div style="left:0px;top:1048px;width:188px;height:48px;background:#303030;border-radius:6px 6px 0 0;"></div>
<svg style="left:18px;top:1062.5px" width="24" height="21" viewBox="0 0 24 21"><path d="M1.5 0H9.4Q10.4 0 10.9 .8L13 4.4H22.5Q24 4.4 24 5.9V19.5Q24 21 22.5 21H1.5Q0 21 0 19.5V1.5Q0 0 1.5 0Z" fill="#a8a8a8"/></svg>
<span class="t g" style="left:49.0px;top:1062px;font-size:25.2px;line-height:25.2px;color:#a6a6a6;letter-spacing:0.268px;">Project</span>
<svg style="left:209.5px;top:1061px" width="21" height="22" viewBox="0 0 21 22"><rect x="0" y="0" width="21" height="22" rx="2" fill="#a8a8a8"/><rect x="3" y="3.6" width="15" height="2" fill="#111"/><rect x="3" y="8" width="15" height="2" fill="#111"/><rect x="3" y="12.4" width="15" height="2" fill="#111"/><rect x="3" y="16.8" width="10" height="2" fill="#111"/></svg>
<span class="t g" style="left:240.0px;top:1062px;font-size:25.2px;line-height:25.2px;color:#a6a6a6;letter-spacing:0.016px;">Console</span>
<svg style="left:410px;top:1060px" width="24" height="24" viewBox="0 0 24 24"><circle cx="12" cy="12" r="11.8" fill="#a8a8a8"/><path d="M12 4.6V13H19" fill="none" stroke="#111" stroke-width="2.6"/></svg>
<span class="t g" style="left:443.0px;top:1062px;font-size:25.2px;line-height:25.2px;color:#a6a6a6;letter-spacing:0.063px;">Animation</span>
<svg style="left:2081px;top:1062px" width="18" height="20" viewBox="0 0 18 20"><rect x="1.1" y="10.4" width="15.8" height="8.6" rx="0.8" fill="none" stroke="#b0b0b0" stroke-width="2"/><path d="M4.3 7.2A4.75 5.6 0 0 1 13.8 6.6V10.4" fill="none" stroke="#b0b0b0" stroke-width="2"/></svg>
<svg style="left:2121px;top:1061px" width="6" height="22" viewBox="0 0 6 22"><circle cx="3" cy="3" r="2.3" fill="#a8a8a8"/><circle cx="3" cy="11" r="2.3" fill="#a8a8a8"/><circle cx="3" cy="19" r="2.3" fill="#a8a8a8"/></svg>
<div style="left:0px;top:1096px;width:2150px;height:41px;background:#303030;"></div>
<div style="left:0px;top:1136px;width:2150px;height:2px;background:#1e1e1e;"></div>
<svg style="left:14px;top:1104.5px" width="23" height="23" viewBox="0 0 23 23"><rect x="0" y="9.75" width="23" height="3.5" fill="#b0b0b0"/><rect x="9.75" y="0" width="3.5" height="23" fill="#b0b0b0"/></svg>
<svg style="left:47px;top:1112px" width="14" height="8" viewBox="0 0 14 8"><path d="M0 0H14L7.0 8Z" fill="#a0a0a0"/></svg>
<div style="left:1218px;top:1100px;width:635px;height:32px;background:#222222;border-radius:7px;border:2px solid #141414;box-sizing:border-box;"></div>
<svg style="left:1227px;top:1109px" width="15" height="15" viewBox="0 0 24 24"><circle cx="9.6" cy="9.6" r="7.4" fill="none" stroke="#a8a8a8" stroke-width="2.6"/><path d="M14.8 14.8L22.4 22.4" stroke="#a8a8a8" stroke-width="3.25" stroke-linecap="round"/></svg>
<div style="left:1818px;top:1102px;width:2px;height:28px;background:#181818;"></div>
<svg style="left:1824px;top:1104px" width="25" height="25" viewBox="0 0 25 25"><path d="M4 8V3.6A1.6 1.6 0 0 1 5.6 2H21.4A1.6 1.6 0 0 1 23 3.6V19.4A1.6 1.6 0 0 1 21.4 21H17" fill="none" stroke="#9a9a9a" stroke-width="2.2"/><rect x="2.2" y="15.2" width="7.6" height="7.6" fill="none" stroke="#9a9a9a" stroke-width="2"/><path d="M8.6 16.4L17 8M10.8 7.4H17.6V14.2" fill="none" stroke="#9a9a9a" stroke-width="2.3"/></svg>
<div style="left:1858px;top:1096px;width:2px;height:40px;background:#1c1c1c;"></div>
<div style="left:1910px;top:1096px;width:2px;height:40px;background:#1c1c1c;"></div>
<div style="left:1962px;top:1096px;width:2px;height:40px;background:#1c1c1c;"></div>
<div style="left:2014px;top:1096px;width:2px;height:40px;background:#1c1c1c;"></div>
<div style="left:2066px;top:1096px;width:2px;height:40px;background:#1c1c1c;"></div>
<svg style="left:1872px;top:1101px" width="26" height="28" viewBox="0 0 26 28"><rect x="3" y="0" width="11.6" height="11.6" fill="#a8a8a8"/><circle cx="7.6" cy="20.4" r="7.2" fill="#a8a8a8"/><path d="M19.8 7.6L25.5 19.3H14Z" fill="#a8a8a8"/></svg>
<svg style="left:1925.5px;top:1105.5px" width="20" height="20.5" viewBox="0 0 22 22"><path d="M0.6 12.2L14 1H21.4V9L9.2 21.6Z" fill="#a0a0a0"/><circle cx="16.6" cy="6" r="1.7" fill="#303030"/></svg>
<svg style="left:1975px;top:1102px" width="27" height="27" viewBox="0 0 27 27"><path d="M8 .6H19L26.4 8V19L19 26.4H8L.6 19V8Z" fill="#a8a8a8"/><rect x="11.7" y="5.4" width="3.6" height="10.2" fill="#303030"/><circle cx="13.5" cy="20" r="2.1" fill="#303030"/></svg>
<svg style="left:2028.5px;top:1103.5px" width="24.5" height="24.5" viewBox="0 0 100 100"><polygon points="50.0,2.0 63.5,33.4 97.6,36.5 71.9,59.1 79.4,92.5 50.0,75.0 20.6,92.5 28.1,59.1 2.4,36.5 36.5,33.4" fill="#6e6e6e" stroke="#6e6e6e" stroke-width="3" stroke-linejoin="round"/></svg>
<svg style="left:2079px;top:1107px" width="29" height="18" viewBox="0 0 29 18"><path d="M1 9Q14.5 -6 28 9Q14.5 24 1 9Z" fill="none" stroke="#555555" stroke-width="2"/><circle cx="14.5" cy="8" r="5.6" fill="#555555"/></svg>
<span class="t g" style="left:2111.5px;top:1104px;font-size:25.2px;line-height:25.2px;color:#a6a6a6;letter-spacing:0.992px;">23</span>
<div style="left:0px;top:1138px;width:389px;height:522px;background:#2e2e2e;"></div>
<div style="left:0px;top:1296px;width:389px;height:32px;background:#3e3e3e;"></div>
<div style="left:389px;top:1138px;width:25px;height:522px;background:#2b2b2b;"></div>
<div style="left:388px;top:1138px;width:2px;height:522px;background:#252525;"></div>
<div style="left:392px;top:1170px;width:20px;height:203px;background:#4a4a4a;border-radius:10px;"></div>
<svg style="left:395.5px;top:1149px" width="14" height="9" viewBox="0 0 14 9"><path d="M0 9H14L7.0 0Z" fill="#a0a0a0"/></svg>
<svg style="left:395.5px;top:1639px" width="14" height="9" viewBox="0 0 14 9"><path d="M0 0H14L7.0 9Z" fill="#a0a0a0"/></svg>
<div style="left:414px;top:1138px;width:2px;height:522px;background:#161616;"></div>
<svg style="left:8px;top:1147px" width="18" height="15.5" viewBox="0 0 18 15.5"><path d="M0 0H18L9.0 15.5Z" fill="#555555"/></svg>
<svg style="left:36px;top:1142px" width="25" height="25" viewBox="0 0 100 100"><polygon points="50.0,2.0 63.5,33.4 97.6,36.5 71.9,59.1 79.4,92.5 50.0,75.0 20.6,92.5 28.1,59.1 2.4,36.5 36.5,33.4" fill="#a8a8a8" stroke="#a8a8a8" stroke-width="3" stroke-linejoin="round"/></svg>
<span class="t g" style="left:70.0px;top:1141px;font-size:25px;line-height:25px;color:#a8a8a8;font-weight:700;letter-spacing:-0.469px;">Favorites</span>
<svg style="left:63.5px;top:1173.5px" width="25" height="25" viewBox="0 0 24 24"><circle cx="9.6" cy="9.6" r="7.4" fill="none" stroke="#a8a8a8" stroke-width="2.4"/><path d="M14.8 14.8L22.4 22.4" stroke="#a8a8a8" stroke-width="3.0" stroke-linecap="round"/></svg>
<span class="t g" style="left:97.0px;top:1173px;font-size:25.2px;line-height:25.2px;color:#a6a6a6;letter-spacing:-0.048px;">All Materials</span>
<svg style="left:63.5px;top:1205.5px" width="25" height="25" viewBox="0 0 24 24"><circle cx="9.6" cy="9.6" r="7.4" fill="none" stroke="#a8a8a8" stroke-width="2.4"/><path d="M14.8 14.8L22.4 22.4" stroke="#a8a8a8" stroke-width="3.0" stroke-linecap="round"/></svg>
<span class="t g" style="left:97.0px;top:1205px;font-size:25.2px;line-height:25.2px;color:#a6a6a6;letter-spacing:-0.066px;">All Models</span>
<svg style="left:63.5px;top:1237.5px" width="25" height="25" viewBox="0 0 24 24"><circle cx="9.6" cy="9.6" r="7.4" fill="none" stroke="#a8a8a8" stroke-width="2.4"/><path d="M14.8 14.8L22.4 22.4" stroke="#a8a8a8" stroke-width="3.0" stroke-linecap="round"/></svg>
<span class="t g" style="left:97.0px;top:1237px;font-size:25.2px;line-height:25.2px;color:#a6a6a6;letter-spacing:-0.170px;">All Prefabs</span>
<svg style="left:8px;top:1305px" width="18" height="15.5" viewBox="0 0 18 15.5"><path d="M0 0H18L9.0 15.5Z" fill="#555555"/></svg>
<svg style="left:36px;top:1301.5px" width="27" height="22" viewBox="0 0 27 22"><path d="M1.2 20V2.6A1.4 1.4 0 0 1 2.6 1.2H9.4L12 4.8H21.4A1.4 1.4 0 0 1 22.8 6.2V8.4" fill="none" stroke="#a8a8a8" stroke-width="2.2"/><path d="M5.6 9H26.4L22.6 21.4H1.4Z" fill="#a8a8a8"/></svg>
<span class="t g" style="left:71.0px;top:1299px;font-size:25px;line-height:25px;color:#a8a8a8;font-weight:700;letter-spacing:-0.618px;">Assets</span>
<svg style="left:64px;top:1334px" width="24" height="21" viewBox="0 0 24 21"><path d="M1.5 0H9.4Q10.4 0 10.9 .8L13 4.4H22.5Q24 4.4 24 5.9V19.5Q24 21 22.5 21H1.5Q0 21 0 19.5V1.5Q0 0 1.5 0Z" fill="#a8a8a8"/></svg>
<span class="t g" style="left:97.0px;top:1331px;font-size:25.2px;line-height:25.2px;color:#a6a6a6;">Animations</span>
<svg style="left:38px;top:1367px" width="15.5" height="18" viewBox="0 0 15.5 18"><path d="M0 0V18L15.5 9.0Z" fill="#555555"/></svg>
<svg style="left:64px;top:1366px" width="24" height="21" viewBox="0 0 24 21"><path d="M1.5 0H9.4Q10.4 0 10.9 .8L13 4.4H22.5Q24 4.4 24 5.9V19.5Q24 21 22.5 21H1.5Q0 21 0 19.5V1.5Q0 0 1.5 0Z" fill="#a8a8a8"/></svg>
<span class="t g" style="left:97.0px;top:1363px;font-size:25.2px;line-height:25.2px;color:#a6a6a6;letter-spacing:-0.103px;">Audio</span>
<svg style="left:38px;top:1399px" width="15.5" height="18" viewBox="0 0 15.5 18"><path d="M0 0V18L15.5 9.0Z" fill="#555555"/></svg>
<svg style="left:64px;top:1398px" width="24" height="21" viewBox="0 0 24 21"><path d="M1.5 0H9.4Q10.4 0 10.9 .8L13 4.4H22.5Q24 4.4 24 5.9V19.5Q24 21 22.5 21H1.5Q0 21 0 19.5V1.5Q0 0 1.5 0Z" fill="#a8a8a8"/></svg>
<span class="t g" style="left:96.0px;top:1395px;font-size:25.2px;line-height:25.2px;color:#a6a6a6;letter-spacing:0.157px;">Characters</span>
<svg style="left:38px;top:1431px" width="15.5" height="18" viewBox="0 0 15.5 18"><path d="M0 0V18L15.5 9.0Z" fill="#555555"/></svg>
<svg style="left:64px;top:1430px" width="24" height="21" viewBox="0 0 24 21"><path d="M1.5 0H9.4Q10.4 0 10.9 .8L13 4.4H22.5Q24 4.4 24 5.9V19.5Q24 21 22.5 21H1.5Q0 21 0 19.5V1.5Q0 0 1.5 0Z" fill="#a8a8a8"/></svg>
<span class="t g" style="left:95.0px;top:1427px;font-size:25.2px;line-height:25.2px;color:#a6a6a6;letter-spacing:-0.109px;">LowPoly Environment Pac</span>
<svg style="left:64px;top:1462px" width="24" height="21" viewBox="0 0 24 21"><path d="M1.5 0H9.4Q10.4 0 10.9 .8L13 4.4H22.5Q24 4.4 24 5.9V19.5Q24 21 22.5 21H1.5Q0 21 0 19.5V1.5Q0 0 1.5 0Z" fill="#a8a8a8"/></svg>
<span class="t g" style="left:95.0px;top:1459px;font-size:25.2px;line-height:25.2px;color:#a6a6a6;letter-spacing:0.302px;">Materials</span>
<svg style="left:64px;top:1494px" width="24" height="21" viewBox="0 0 24 21"><path d="M1.5 0H9.4Q10.4 0 10.9 .8L13 4.4H22.5Q24 4.4 24 5.9V19.5Q24 21 22.5 21H1.5Q0 21 0 19.5V1.5Q0 0 1.5 0Z" fill="#a8a8a8"/></svg>
<span class="t g" style="left:96.0px;top:1491px;font-size:25.2px;line-height:25.2px;color:#a6a6a6;letter-spacing:-0.284px;">Scenes</span>
<svg style="left:64px;top:1526px" width="24" height="21" viewBox="0 0 24 21"><path d="M1.5 0H9.4Q10.4 0 10.9 .8L13 4.4H22.5Q24 4.4 24 5.9V19.5Q24 21 22.5 21H1.5Q0 21 0 19.5V1.5Q0 0 1.5 0Z" fill="#a8a8a8"/></svg>
<span class="t g" style="left:96.0px;top:1523px;font-size:25.2px;line-height:25.2px;color:#a6a6a6;letter-spacing:0.269px;">Scripts</span>
<svg style="left:64px;top:1558px" width="24" height="21" viewBox="0 0 24 21"><path d="M1.5 0H9.4Q10.4 0 10.9 .8L13 4.4H22.5Q24 4.4 24 5.9V19.5Q24 21 22.5 21H1.5Q0 21 0 19.5V1.5Q0 0 1.5 0Z" fill="#a8a8a8"/></svg>
<span class="t g" style="left:96.0px;top:1555px;font-size:25.2px;line-height:25.2px;color:#a6a6a6;letter-spacing:0.369px;">Settings</span>
<svg style="left:38px;top:1591px" width="15.5" height="18" viewBox="0 0 15.5 18"><path d="M0 0V18L15.5 9.0Z" fill="#555555"/></svg>
<svg style="left:64px;top:1590px" width="24" height="21" viewBox="0 0 24 21"><path d="M1.5 0H9.4Q10.4 0 10.9 .8L13 4.4H22.5Q24 4.4 24 5.9V19.5Q24 21 22.5 21H1.5Q0 21 0 19.5V1.5Q0 0 1.5 0Z" fill="#a8a8a8"/></svg>
<span class="t g" style="left:97.0px;top:1587px;font-size:25.2px;line-height:25.2px;color:#a6a6a6;letter-spacing:0.094px;">TextMesh Pro</span>
<svg style="left:64px;top:1622px" width="24" height="21" viewBox="0 0 24 21"><path d="M1.5 0H9.4Q10.4 0 10.9 .8L13 4.4H22.5Q24 4.4 24 5.9V19.5Q24 21 22.5 21H1.5Q0 21 0 19.5V1.5Q0 0 1.5 0Z" fill="#a8a8a8"/></svg>
<span class="t g" style="left:97.0px;top:1619px;font-size:25.2px;line-height:25.2px;color:#a6a6a6;letter-spacing:0.201px;">Textures</span>
<svg style="left:38px;top:1655px" width="15.5" height="18" viewBox="0 0 15.5 18"><path d="M0 0V18L15.5 9.0Z" fill="#555555"/></svg>
<svg style="left:64px;top:1654px" width="24" height="21" viewBox="0 0 24 21"><path d="M1.5 0H9.4Q10.4 0 10.9 .8L13 4.4H22.5Q24 4.4 24 5.9V19.5Q24 21 22.5 21H1.5Q0 21 0 19.5V1.5Q0 0 1.5 0Z" fill="#a8a8a8"/></svg>
<span class="t g" style="left:97.0px;top:1651px;font-size:25.2px;line-height:25.2px;color:#a6a6a6;letter-spacing:-0.096px;">TutorialInfo</span>
<div style="left:416px;top:1138px;width:1734px;height:522px;background:#292929;"></div>
<div style="left:416px;top:1138px;width:1734px;height:42px;background:#333333;"></div>
<span class="t g" style="left:424.5px;top:1145px;font-size:25px;line-height:25px;color:#a8a8a8;font-weight:700;letter-spacing:-0.618px;">Assets</span>
<svg style="left:461.7px;top:1221px" width="86" height="72" viewBox="0 0 86 72"><path d="M5 0H34.5Q37.5 0 39 2.6L45.5 14.4H81Q86 14.4 86 19.4V67Q86 72 81 72H5Q0 72 0 67V5Q0 0 5 0Z" fill="#9e9e9e"/></svg>
<span class="t g" style="left:452.7px;top:1321px;font-size:20.8px;line-height:20.8px;color:#a6a6a6;letter-spacing:0.169px;">Animations</span>
<svg style="left:602.9px;top:1221px" width="86" height="72" viewBox="0 0 86 72"><path d="M5 0H34.5Q37.5 0 39 2.6L45.5 14.4H81Q86 14.4 86 19.4V67Q86 72 81 72H5Q0 72 0 67V5Q0 0 5 0Z" fill="#9e9e9e"/></svg>
<span class="t g" style="left:619.4px;top:1321px;font-size:20.8px;line-height:20.8px;color:#a6a6a6;letter-spacing:0.094px;">Audio</span>
<svg style="left:744.0999999999999px;top:1221px" width="86" height="72" viewBox="0 0 86 72"><path d="M5 0H34.5Q37.5 0 39 2.6L45.5 14.4H81Q86 14.4 86 19.4V67Q86 72 81 72H5Q0 72 0 67V5Q0 0 5 0Z" fill="#9e9e9e"/></svg>
<span class="t g" style="left:734.1px;top:1321px;font-size:20.8px;line-height:20.8px;color:#a6a6a6;letter-spacing:0.410px;">Characters</span>
<svg style="left:885.3px;top:1221px" width="86" height="72" viewBox="0 0 86 72"><path d="M5 0H34.5Q37.5 0 39 2.6L45.5 14.4H81Q86 14.4 86 19.4V67Q86 72 81 72H5Q0 72 0 67V5Q0 0 5 0Z" fill="#9e9e9e"/></svg>
<span class="t g" style="left:870.8px;top:1321px;font-size:20.8px;line-height:20.8px;color:#a6a6a6;letter-spacing:0.017px;">LowPoly E...</span>
<svg style="left:1026.5px;top:1221px" width="86" height="72" viewBox="0 0 86 72"><path d="M5 0H34.5Q37.5 0 39 2.6L45.5 14.4H81Q86 14.4 86 19.4V67Q86 72 81 72H5Q0 72 0 67V5Q0 0 5 0Z" fill="#9e9e9e"/></svg>
<span class="t g" style="left:1025.5px;top:1321px;font-size:20.8px;line-height:20.8px;color:#a6a6a6;letter-spacing:0.379px;">Materials</span>
<svg style="left:1167.7px;top:1221px" width="86" height="72" viewBox="0 0 86 72"><path d="M5 0H34.5Q37.5 0 39 2.6L45.5 14.4H81Q86 14.4 86 19.4V67Q86 72 81 72H5Q0 72 0 67V5Q0 0 5 0Z" fill="#9e9e9e"/></svg>
<span class="t g" style="left:1176.2px;top:1321px;font-size:20.8px;line-height:20.8px;color:#a6a6a6;letter-spacing:0.006px;">Scenes</span>
<svg style="left:1308.8999999999999px;top:1221px" width="86" height="72" viewBox="0 0 86 72"><path d="M5 0H34.5Q37.5 0 39 2.6L45.5 14.4H81Q86 14.4 86 19.4V67Q86 72 81 72H5Q0 72 0 67V5Q0 0 5 0Z" fill="#9e9e9e"/></svg>
<span class="t g" style="left:1318.9px;top:1321px;font-size:20.8px;line-height:20.8px;color:#a6a6a6;letter-spacing:0.473px;">Scripts</span>
<svg style="left:1450.1px;top:1221px" width="86" height="72" viewBox="0 0 86 72"><path d="M5 0H34.5Q37.5 0 39 2.6L45.5 14.4H81Q86 14.4 86 19.4V67Q86 72 81 72H5Q0 72 0 67V5Q0 0 5 0Z" fill="#9e9e9e"/></svg>
<span class="t g" style="left:1454.6px;top:1321px;font-size:20.8px;line-height:20.8px;color:#a6a6a6;letter-spacing:0.322px;">Settings</span>
<svg style="left:1591.3px;top:1221px" width="86" height="72" viewBox="0 0 86 72"><path d="M5 0H34.5Q37.5 0 39 2.6L45.5 14.4H81Q86 14.4 86 19.4V67Q86 72 81 72H5Q0 72 0 67V5Q0 0 5 0Z" fill="#9e9e9e"/></svg>
<span class="t g" style="left:1580.3px;top:1321px;font-size:20.8px;line-height:20.8px;color:#a6a6a6;letter-spacing:0.345px;">TextMesh...</span>
<svg style="left:1732.5px;top:1221px" width="86" height="72" viewBox="0 0 86 72"><path d="M5 0H34.5Q37.5 0 39 2.6L45.5 14.4H81Q86 14.4 86 19.4V67Q86 72 81 72H5Q0 72 0 67V5Q0 0 5 0Z" fill="#9e9e9e"/></svg>
<span class="t g" style="left:1735.5px;top:1321px;font-size:20.8px;line-height:20.8px;color:#a6a6a6;letter-spacing:0.257px;">Textures</span>
<svg style="left:1873.7px;top:1221px" width="86" height="72" viewBox="0 0 86 72"><path d="M5 0H34.5Q37.5 0 39 2.6L45.5 14.4H81Q86 14.4 86 19.4V67Q86 72 81 72H5Q0 72 0 67V5Q0 0 5 0Z" fill="#9e9e9e"/></svg>
<span class="t g" style="left:1864.2px;top:1321px;font-size:20.8px;line-height:20.8px;color:#a6a6a6;letter-spacing:0.209px;">TutorialInfo</span>
<svg style="left:2014.8999999999996px;top:1221px" width="86" height="64" viewBox="0 0 86 64"><path d="M52 62Q45 62 48 56L76 4Q80 -2 84 4L112 56Q115 62 108 62Z" fill="#66c9b5" transform="translate(-26 0)"/><g stroke="#9e9e9e" stroke-width="6" stroke-linecap="round"><path d="M11 19H34M5 33H26M3 47H16"/></g></svg>
<span class="t g" style="left:2016.9px;top:1321px;font-size:20.8px;line-height:20.8px;color:#a6a6a6;letter-spacing:-0.024px;">FadeOut</span>
<svg style="left:462px;top:1386px" width="86" height="86" viewBox="0 0 86 86"><path d="M30 18H63Q67 18 67 22V42M56 68H23Q19 68 19 64V44" fill="none" stroke="#66c9b5" stroke-width="8"/><rect x="0" y="0" width="36" height="36" rx="7" fill="#9e9e9e"/><rect x="50" y="50" width="36" height="36" rx="7" fill="#9e9e9e"/></svg>
<span class="t g" style="left:463.7px;top:1492px;font-size:20.8px;line-height:20.8px;color:#a6a6a6;letter-spacing:-0.024px;">FadeOut</span>
<svg style="left:595px;top:1386px" width="125" height="88" viewBox="0 0 125 88"><defs><linearGradient id="ib" x1="0" y1="0" x2="1" y2="1"><stop offset="0" stop-color="#1f9dc4"/><stop offset="1" stop-color="#0f76a6"/></linearGradient></defs><path d="M0 12L33 0V68L0 79Z" fill="#cfcfcf"/><path d="M33 0L69 10V78L33 68Z" fill="#9a9a9a"/><path d="M69 10L101 0V68L69 78Z" fill="#cdcdcd"/><path d="M84 26L62 56H76L73 88L97 50H82Z" fill="url(#ib)"/><circle cx="108.5" cy="42" r="16.5" fill="#1a1a1a" opacity=".35"/><circle cx="108" cy="41" r="16" fill="#a4a4a4"/><path d="M103 33L118 41L103 49Z" fill="#2c2c2c"/></svg>
<span class="t g" style="left:591.9px;top:1492px;font-size:20.8px;line-height:20.8px;color:#a6a6a6;letter-spacing:0.431px;">InputSyst...</span>
<div style="left:737px;top:1488px;width:101px;height:28px;background:#3d3d3d;border-radius:5px;"></div>
<svg style="left:743px;top:1380px" width="101" height="100" viewBox="0 0 101 100"><g fill="none" stroke="#4f9fd8" stroke-width="7" stroke-linejoin="round" stroke-linecap="round"><path d="M40 5L76 24V44M42 86L4 66V24L40 5M4 24L40 44L76 24M40 44V84"/></g><g fill="none" stroke="#c8532e" stroke-width="7.5" stroke-linejoin="round" transform="translate(0 2.6)"><path d="M72 50H66Q62 50 62 55V64Q62 70 55 70.5Q62 71 62 77V86Q62 91 66 91H72"/><path d="M72 50H66Q62 50 62 55V64Q62 70 55 70.5Q62 71 62 77V86Q62 91 66 91H72" transform="translate(152.5 0) scale(-1 1)"/></g></svg>
<span class="t g" style="left:748.1px;top:1492px;font-size:20.8px;line-height:20.8px;color:#a6a6a6;letter-spacing:-0.208px;">Readme</span>
<div style="left:416px;top:1618px;width:1734px;height:42px;background:#333333;"></div>
<svg style="left:425px;top:1625px" width="28" height="28" viewBox="0 0 101 100"><g fill="none" stroke="#4f9fd8" stroke-width="8" stroke-linejoin="round" stroke-linecap="round"><path d="M40 5L76 24V44M42 86L4 66V24L40 5M4 24L40 44L76 24M40 44V84"/></g><g fill="none" stroke="#c8532e" stroke-width="8.5" stroke-linejoin="round" transform="translate(0 2.6)"><path d="M72 50H66Q62 50 62 55V64Q62 70 55 70.5Q62 71 62 77V86Q62 91 66 91H72"/><path d="M72 50H66Q62 50 62 55V64Q62 70 55 70.5Q62 71 62 77V86Q62 91 66 91H72" transform="translate(152.5 0) scale(-1 1)"/></g></svg>
<span class="t g" style="left:457.0px;top:1628px;font-size:25.2px;line-height:25.2px;color:#a6a6a6;letter-spacing:-0.111px;">Assets/Readme.asset</span>
<div style="left:2007px;top:1637.5px;width:109px;height:3px;background:#585858;"></div>
<div style="left:2053px;top:1628.5px;width:20px;height:20px;background:#8e8e8e;border-radius:50%;"></div>
<div style="left:0px;top:1660px;width:2880px;height:44px;background:#111111;"></div>
<div style="left:2722px;top:1664px;width:2px;height:40px;background:#1e1e1e;"></div>
<div style="left:2774px;top:1664px;width:2px;height:40px;background:#1e1e1e;"></div>
<div style="left:2826px;top:1664px;width:2px;height:40px;background:#1e1e1e;"></div>
<svg style="left:2735px;top:1669px" width="29" height="29" viewBox="0 0 29 29"><g fill="#a0a0a0"><ellipse cx="14.5" cy="17.2" rx="8.2" ry="9.6"/><path d="M8.6 8.6A6 5.6 0 0 1 20.4 8.6Z"/></g><g stroke="#a0a0a0" stroke-width="2" fill="none" stroke-linejoin="round"><path d="M7.5 13.5L3.4 11.8L2.6 8M21.5 13.5L25.6 11.8L26.4 8M6.5 18H1.6M22.5 18H27.4M7.6 22.5L3.6 24.4L3 28M21.4 22.5L25.4 24.4L26 28M11 4.6L9.2 1.6M18 4.6L19.8 1.6"/></g><path d="M2.2 2.2L27.6 27.6" stroke="#111" stroke-width="4.6"/><path d="M1.6 3L26.6 28" stroke="#a0a0a0" stroke-width="2.1"/></svg>
<svg style="left:2787px;top:1669px" width="29" height="29" viewBox="0 0 29 29"><g fill="#a0a0a0"><ellipse cx="14.5" cy="6" rx="11" ry="4.6"/><path d="M3.5 9.5Q14.5 16 25.5 9.5V13.5Q14.5 20 3.5 13.5Z"/><path d="M3.5 16.5Q14.5 23 25.5 16.5V20.5Q14.5 27 3.5 20.5Z"/></g><path d="M2 2L27.5 27.5" stroke="#111" stroke-width="4.6"/><path d="M1.6 3L26.6 28" stroke="#a0a0a0" stroke-width="2.1"/></svg>
<svg style="left:2839px;top:1669px" width="29" height="29" viewBox="0 0 29 29"><circle cx="14.5" cy="14.5" r="13" fill="none" stroke="#a0a0a0" stroke-width="2"/><path d="M9 15L13 19L20.5 10.5" fill="none" stroke="#a0a0a0" stroke-width="2.8"/></svg>
</div></body></html>
